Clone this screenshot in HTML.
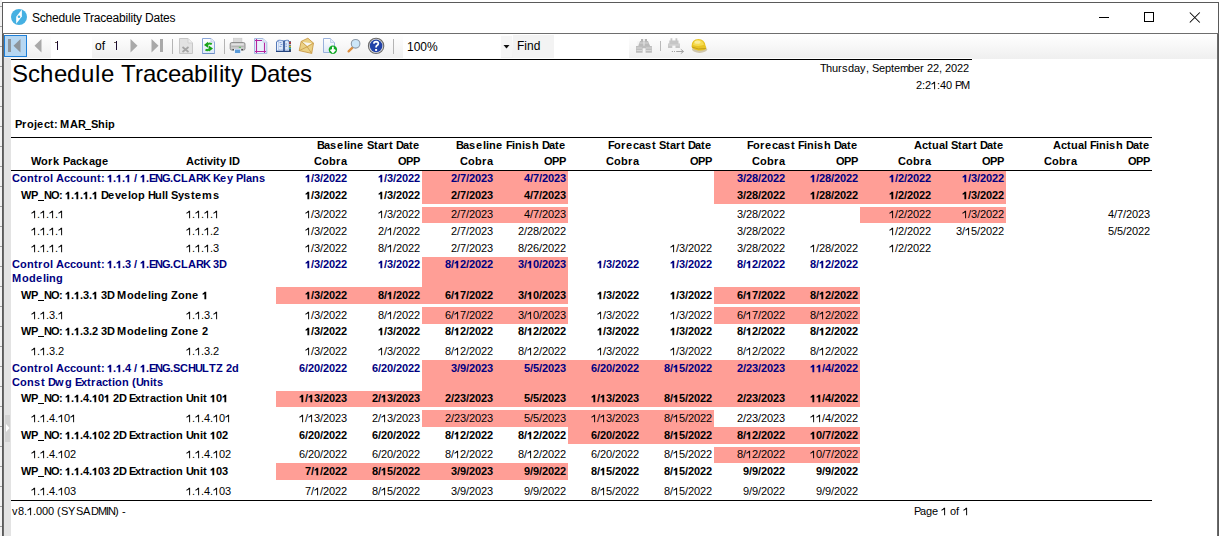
<!DOCTYPE html>
<html><head><meta charset="utf-8">
<style>
html,body{margin:0;padding:0;width:1221px;height:536px;overflow:hidden;background:#fff;}
body{position:relative;font-family:"Liberation Sans",sans-serif;}
.abs{position:absolute;}
#bgl{position:absolute;left:0;top:0;width:2px;height:536px;background:#f2f2f2;}
#win{position:absolute;left:2px;top:2px;width:1217px;height:534px;background:#fff;}
#wb-top{position:absolute;left:2px;top:2px;width:1217px;height:1px;background:#5a5a5a;}
#wb-l{position:absolute;left:2px;top:2px;width:1px;height:534px;background:#5a5a5a;}
#wb-l2{position:absolute;left:3px;top:33px;width:1px;height:503px;background:#6a6a6a;}
#wb-r{position:absolute;left:1218px;top:2px;width:1px;height:534px;background:#5a5a5a;}
#wb-r2{position:absolute;left:1217px;top:33px;width:1px;height:503px;background:#6a6a6a;}
#tb-line{position:absolute;left:2px;top:33px;width:1217px;height:1px;background:#6e6e6e;}
#title{position:absolute;left:32px;top:10px;font-size:12px;line-height:16px;letter-spacing:-0.2px;color:#000;}
#toolbar{position:absolute;left:4px;top:34px;width:1213px;height:25px;background:linear-gradient(#ffffff,#efefef);}
#gutter{position:absolute;left:4px;top:58px;width:7px;height:478px;background:#e3e3e3;}
.t{position:absolute;white-space:nowrap;font-size:11px;line-height:13px;color:#000;}
.t i{display:inline-block;font-style:normal;}
.t i.g1{position:relative;color:transparent;}
.o1{position:absolute;left:0;top:0;}
.us{position:absolute;left:0;top:11px;height:1px;}
.bd{font-weight:bold;}
.nv{color:#000080;}
.ttl{font-size:24px;line-height:28px;letter-spacing:0.1px;}
.ln{position:absolute;height:1px;background:#000;}
.pk{position:absolute;background:#FF9E96;}
</style></head><body>
<div id="bgl"></div><div class="abs" style="left:0;top:6px;width:2px;height:1px;background:#a0a0a0"></div><div class="abs" style="left:0;top:26px;width:2px;height:1px;background:#a0a0a0"></div><div class="abs" style="left:0;top:46px;width:2px;height:1px;background:#a0a0a0"></div><div class="abs" style="left:0;top:66px;width:2px;height:1px;background:#a0a0a0"></div><div class="abs" style="left:0;top:86px;width:2px;height:1px;background:#a0a0a0"></div><div class="abs" style="left:0;top:106px;width:2px;height:1px;background:#a0a0a0"></div><div class="abs" style="left:0;top:126px;width:2px;height:1px;background:#a0a0a0"></div><div class="abs" style="left:0;top:146px;width:2px;height:1px;background:#a0a0a0"></div><div class="abs" style="left:0;top:166px;width:2px;height:1px;background:#a0a0a0"></div><div class="abs" style="left:0;top:186px;width:2px;height:1px;background:#a0a0a0"></div><div class="abs" style="left:0;top:206px;width:2px;height:1px;background:#a0a0a0"></div><div class="abs" style="left:0;top:226px;width:2px;height:1px;background:#a0a0a0"></div><div class="abs" style="left:0;top:246px;width:2px;height:1px;background:#a0a0a0"></div><div class="abs" style="left:0;top:266px;width:2px;height:1px;background:#a0a0a0"></div><div class="abs" style="left:0;top:286px;width:2px;height:1px;background:#a0a0a0"></div><div class="abs" style="left:0;top:306px;width:2px;height:1px;background:#a0a0a0"></div><div class="abs" style="left:0;top:326px;width:2px;height:1px;background:#a0a0a0"></div><div class="abs" style="left:0;top:346px;width:2px;height:1px;background:#a0a0a0"></div><div class="abs" style="left:0;top:366px;width:2px;height:1px;background:#a0a0a0"></div><div class="abs" style="left:0;top:386px;width:2px;height:1px;background:#a0a0a0"></div><div class="abs" style="left:0;top:406px;width:2px;height:1px;background:#a0a0a0"></div><div class="abs" style="left:0;top:426px;width:2px;height:1px;background:#a0a0a0"></div><div class="abs" style="left:0;top:446px;width:2px;height:1px;background:#a0a0a0"></div><div class="abs" style="left:0;top:466px;width:2px;height:1px;background:#a0a0a0"></div><div class="abs" style="left:0;top:486px;width:2px;height:1px;background:#a0a0a0"></div><div class="abs" style="left:0;top:506px;width:2px;height:1px;background:#a0a0a0"></div><div class="abs" style="left:0;top:526px;width:2px;height:1px;background:#a0a0a0"></div>
<div id="win"></div>
<div id="wb-top"></div><div id="wb-l"></div><div id="wb-l2"></div><div id="wb-r"></div><div id="wb-r2"></div>
<div id="tb-line"></div>
<!-- app icon -->
<svg class="abs" style="left:11px;top:9px" width="16" height="16" viewBox="0 0 16 16">
<circle cx="8" cy="8" r="8" fill="#45b0e2"/>
<path d="M10.9 0.6 L10.9 7.6 L5.2 14.8 L5.2 7.7 Z" fill="#fff"/>
<circle cx="8" cy="7.7" r="1.3" fill="#45b0e2"/>
</svg>
<div id="title">Schedule Traceability Dates</div>
<!-- window buttons -->
<div class="abs" style="left:1099px;top:17px;width:10px;height:1px;background:#000"></div>
<div class="abs" style="left:1144px;top:12px;width:8px;height:8px;border:1px solid #000"></div>
<svg class="abs" style="left:1189px;top:12px" width="12" height="11" viewBox="0 0 12 11"><path d="M0.8 0.5 L10.8 10.5 M10.8 0.5 L0.8 10.5" stroke="#000" stroke-width="1.05"/></svg>
<div id="toolbar"></div>
<div id="gutter"></div>
<div class="abs" style="left:5px;top:415px;width:5px;height:27px;background:#d2d2d2"></div>
<svg class="abs" style="left:6px;top:424px" width="4" height="8" viewBox="0 0 4 8"><path d="M0 0 L3.5 4 L0 8 Z" fill="#fff"/></svg>
<div class="abs" style="left:11px;top:58px;width:961px;height:1px;background:#fff"></div>
<!-- toolbar items -->
<div class="abs" style="left:4px;top:35px;width:23px;height:22px;box-sizing:border-box;border:1px solid #1e7fd8;background:#b6d7f2"></div>
<div class="abs" style="left:8px;top:39px;width:3px;height:13px;background:#8d959c"></div>
<svg class="abs" style="left:13px;top:39px" width="8" height="14" viewBox="0 0 8 14"><path d="M7.5 0 L7.5 13.5 L0.5 6.75 Z" fill="#8d959c"/></svg>
<svg class="abs" style="left:34px;top:39px" width="8" height="14" viewBox="0 0 8 14"><path d="M7.5 0 L7.5 13.5 L0.5 6.75 Z" fill="#a9a9a9"/></svg>
<div class="abs" style="left:51px;top:35px;width:41px;height:23px;background:#fff"></div>
<div class="abs" style="left:57px;top:41px;width:1px;height:9px;background:#1a0a30"></div><div class="abs" style="left:55px;top:42px;width:2px;height:1px;background:#6a5a50"></div>
<div class="abs t" style="left:95px;top:38px;font-size:12px;line-height:16px;color:#000">of</div><div class="abs" style="left:116px;top:41px;width:1px;height:9px;background:#1a0a30"></div><div class="abs" style="left:114px;top:42px;width:2px;height:1px;background:#6a5a50"></div>
<svg class="abs" style="left:130px;top:39px" width="8" height="14" viewBox="0 0 8 14"><path d="M0.5 0 L0.5 13.5 L7.5 6.75 Z" fill="#a9a9a9"/></svg>
<svg class="abs" style="left:151px;top:39px" width="8" height="14" viewBox="0 0 8 14"><path d="M0.5 0 L0.5 13.5 L7.5 6.75 Z" fill="#a9a9a9"/></svg>
<div class="abs" style="left:160px;top:39px;width:3px;height:13px;background:#a9a9a9"></div>
<div class="abs" style="left:172px;top:39px;width:1px;height:15px;background:#b4b4b4"></div>
<!-- gray doc x (origin 177,36) -->
<svg class="abs" style="left:177px;top:36px" width="20" height="20" viewBox="0 0 20 20"><path d="M2.5 2.5 H11 L15.5 7 V17.5 H2.5 Z" fill="#e2e2e2" stroke="#c6c6c6"/><path d="M11 2.5 V7 H15.5" fill="#eeeeee" stroke="#d0d0d0"/><path d="M5.5 11 L11.5 16 M11.5 11 L5.5 16" stroke="#a4a4a4" stroke-width="1.7"/></svg>
<!-- refresh doc (origin 200,36) -->
<svg class="abs" style="left:200px;top:36px" width="20" height="20" viewBox="0 0 20 20"><defs><linearGradient id="dg" x1="0" y1="0" x2="0" y2="1"><stop offset="0" stop-color="#ffffff"/><stop offset="1" stop-color="#dce8f8"/></linearGradient></defs><path d="M2.5 2.5 H11 L14.5 6 V17.5 H2.5 Z" fill="url(#dg)" stroke="#8aa6d8"/><path d="M2.5 17.5 H14.5" stroke="#6f8fc8"/><path d="M11 2.5 V6 H14.5" fill="#e8eef8" stroke="#b8c8e4" stroke-width="0.8"/><path d="M4 9 L8 5.8 L8.3 12 Z" fill="#14a014"/><path d="M7 9 Q9 6.5 11.8 8.2" stroke="#22aa22" stroke-width="2" fill="none"/><path d="M13 12.5 L9 15.6 L8.7 9.6 Z" fill="#14a014"/><path d="M10 12.6 Q8 15 5.5 13.6" stroke="#22aa22" stroke-width="2" fill="none"/></svg>
<div class="abs" style="left:224px;top:39px;width:1px;height:15px;background:#b4b4b4"></div>
<!-- printer (origin 228,36) -->
<svg class="abs" style="left:228px;top:36px" width="20" height="20" viewBox="0 0 20 20"><rect x="5.3" y="2.2" width="8.6" height="5" fill="#dadada" stroke="#c8c8c8" stroke-width="0.6"/><rect x="2.2" y="6.5" width="14.8" height="7.6" rx="1.6" fill="#c9c9c9" stroke="#868686" stroke-width="0.9"/><rect x="3.5" y="7.6" width="12.2" height="1.6" fill="#e2e2e2"/><rect x="3.5" y="10" width="12.2" height="1" fill="#b4b4b4"/><rect x="4.5" y="13" width="10.5" height="1.3" fill="#4a4a4a"/><rect x="10.8" y="10.8" width="2.2" height="1.1" fill="#5cc05c"/><rect x="6" y="12.8" width="7.2" height="4.8" fill="#e8f0fa"/><rect x="7" y="13.6" width="5.2" height="3.4" fill="#5a9ad8"/></svg>
<!-- page setup (origin 252,36) -->
<svg class="abs" style="left:252px;top:36px" width="20" height="20" viewBox="0 0 20 20"><path d="M2.5 2.5 H11 L14.8 6.3 V17.5 H2.5 Z" fill="#eaf1fb" stroke="#a4badf"/><path d="M11 2.5 V6.3 H14.8" fill="#e0e8f4" stroke="#c0cee6" stroke-width="0.8"/><path d="M4.5 3 V17 M12.5 6.7 V17 M3 4.5 H10 M3 15.5 H14" stroke="#b4259e" stroke-width="1.1"/></svg>
<!-- book (origin 274,36) -->
<svg class="abs" style="left:274px;top:36px" width="20" height="20" viewBox="0 0 20 20"><path d="M2 5.5 H3.5 V4 Q6.5 3.3 9.5 4.5 Q12.5 3.3 15 4 V5.5 H16.8 V16 H2 Z" fill="#5478b8"/><path d="M3 6 H9.3 V14.6 H3 Z M10.7 6 H15.2 V14.6 H10.7 Z" fill="#f4f8fe"/><path d="M4.3 4.8 Q6.8 4.2 9.2 5.2 V13.8 Q6.8 13 4.3 13.6 Z M10.8 5.2 Q12.8 4.2 14.4 4.8 V13.6 Q12.6 13 10.8 13.8 Z" fill="#e2ecfa" stroke="#8aa8dc" stroke-width="0.5"/><path d="M5.5 6.6 H7.5 M6.5 8.5 H8.3 M5.5 10.4 H7.5 M11.5 8 H13 M11.5 10.3 H13" stroke="#6f92d6" stroke-width="0.9"/><rect x="9.3" y="5" width="1.4" height="11" fill="#2c4c8c"/><path d="M2 15.5 H16.8" stroke="#24447e" stroke-width="1"/><rect x="15.2" y="5.3" width="1.6" height="10" fill="#303848"/><rect x="15.3" y="6.1" width="1.5" height="1.5" fill="#e83232"/><rect x="15.3" y="8" width="1.5" height="1.3" fill="#e0e0e0"/><rect x="15.3" y="9.9" width="1.5" height="1.5" fill="#ece424"/><rect x="15.3" y="11.8" width="1.5" height="1.4" fill="#24cce0"/></svg>
<!-- envelope (origin 296,36) -->
<svg class="abs" style="left:296px;top:36px" width="20" height="20" viewBox="0 0 20 20"><path d="M5.2 5.4 L11.9 2.2 L17.5 7.1 L15.7 17.4 L3.2 14.6 Z" fill="#ebd184" stroke="#c89a48" stroke-width="0.9"/><path d="M6.5 6 L15.7 7.3 L11.2 9.9 Z" fill="#f6f6f6"/><path d="M5.2 5.4 L11.2 10.8 L17.5 7.1 M3.2 14.6 L11.2 10.8 L15.7 17.4" stroke="#c89a48" stroke-width="0.8" fill="none"/></svg>
<!-- export doc (origin 320,36) -->
<svg class="abs" style="left:320px;top:36px" width="20" height="20" viewBox="0 0 20 20"><path d="M3.5 2.5 H10.5 L14.5 6.5 V16.5 H3.5 Z" fill="url(#dg)" stroke="#9ab2dc"/><path d="M10.5 2.5 V6.5 H14.5" fill="#e4ecf8" stroke="#b8c8e4" stroke-width="0.8"/><circle cx="12.9" cy="13.8" r="4.2" fill="#12a826"/><path d="M12.9 10.8 V16.2 M10.6 13.6 L12.9 16.2 L15.2 13.6" stroke="#fff" stroke-width="1.8" fill="none"/></svg>
<!-- magnifier (origin 345,36) -->
<svg class="abs" style="left:345px;top:36px" width="20" height="20" viewBox="0 0 20 20"><path d="M3.6 15.4 L7.5 11.6" stroke="#dc8e3e" stroke-width="2.3" stroke-linecap="round"/><circle cx="10.6" cy="7.8" r="4.3" fill="#cce6f8" stroke="#8d9aa8" stroke-width="1.1"/></svg>
<!-- help (origin 366,36) -->
<svg class="abs" style="left:366px;top:36px" width="20" height="20" viewBox="0 0 20 20"><circle cx="10.1" cy="9.9" r="8.2" fill="#6a6a6a"/><circle cx="10.1" cy="9.9" r="7.1" fill="#e0e0e0"/><circle cx="10.1" cy="9.9" r="6.3" fill="#2142a8"/><path d="M7.8 7.7 Q8 5.6 10.1 5.6 Q12.4 5.7 12.3 7.6 Q12.2 8.8 10.9 9.5 Q10.1 10 10.1 11.5" stroke="#fff" stroke-width="1.8" fill="none"/><rect x="9.1" y="13" width="2" height="1.9" fill="#fff"/></svg>
<div class="abs" style="left:393px;top:39px;width:1px;height:15px;background:#b4b4b4"></div>
<!-- zoom combo -->
<div class="abs" style="left:403px;top:35px;width:98px;height:23px;background:#fff"></div>
<div class="abs t" style="left:407px;top:39px;font-size:12px;line-height:16px;color:#000">100%</div>
<div class="abs" style="left:501px;top:36px;width:11px;height:21px;background:#f6f6f6"></div><svg class="abs" style="left:503px;top:45px" width="7" height="4" viewBox="0 0 7 4"><path d="M0.5 0 H6.5 L3.5 3.5 Z" fill="#111"/></svg>
<div class="abs" style="left:513px;top:35px;width:41px;height:23px;background:#f3f3f3"></div>
<div class="abs t" style="left:517px;top:38px;font-size:12px;line-height:16px;color:#000">Find</div>
<div class="abs" style="left:554px;top:34px;width:75px;height:24px;background:#fff"></div>
<!-- binoculars (origin 634,36) -->
<svg class="abs" style="left:634px;top:36px" width="20" height="20" viewBox="0 0 20 20"><path d="M7 3 H9.2 V5.2 H7 Z M10.8 3 H13 V5.2 H10.8 Z" fill="#b4b4b4"/><path d="M6 5 H9.6 V10.2 H4 Z M10.4 5 H14 L16.2 10.2 H10.4 Z" fill="#bababa"/><path d="M2 10 H8.6 V16.8 H2 Z M11.6 10 H17.9 V16.8 H11.6 Z M8.4 9.8 H11.8 V12.3 H8.4 Z" fill="#bdbdbd"/><path d="M5.5 7 H14.5 M2.5 12 H8 M12 12 H17.5 M2.5 14.5 H8 M12 14.5 H17.5" stroke="#dedede" stroke-width="0.8"/><path d="M4 5.2 V10" stroke="#e8e8e8" stroke-width="0.6"/></svg>
<div class="abs" style="left:660px;top:41px;width:1px;height:10px;background:#b9b9b9"></div>
<svg class="abs" style="left:665px;top:36px" width="22" height="20" viewBox="0 0 22 20"><path d="M5.5 2.2 H7.3 V4.5 H10.5 V2.2 H12.3 V4.5 H13.5 V7.5 H14.9 V12 H10.5 V9.5 H7.3 V12 H3 V7.5 H4.3 V4.5 H5.5 Z" fill="#c6c6c6"/><path d="M3.5 9 H14.5" stroke="#dddddd" stroke-width="0.8"/><path d="M6.8 15.5 H8 M9 15.5 H10 M11.2 15.5 H18.3 M15.8 13.3 L18.6 15.5 L15.8 17.6" stroke="#a4a4a4" stroke-width="1" fill="none"/></svg>
<!-- helmet (origin 691,36) -->
<svg class="abs" style="left:689px;top:36px" width="20" height="20" viewBox="0 0 20 20"><ellipse cx="10.6" cy="13.3" rx="7.5" ry="3.6" fill="#b0a070" opacity="0.55"/><path d="M2.5 10.5 Q2.5 3 9.5 3 Q15.5 3.2 16.5 9.5 Q17.8 11 16.8 13.3 Q13 15.5 7 14 Q3 12.8 2.5 10.5 Z" fill="#e8c424"/><path d="M4 9 Q4.5 4 9.5 4 Q14 4.2 15 8.8 Q10 11 4 9 Z" fill="#f6dc50"/><ellipse cx="8.5" cy="6.2" rx="3" ry="1.6" fill="#faec98"/><path d="M3 11 Q9 14.2 16.8 12.5" stroke="#c09a18" stroke-width="0.9" fill="none"/></svg>

<div class="pk" style="left:422px;top:171px;width:146px;height:33px"></div>
<div class="pk" style="left:714px;top:171px;width:146px;height:33px"></div>
<div class="pk" style="left:860px;top:171px;width:146px;height:33px"></div>
<div class="pk" style="left:422px;top:207px;width:146px;height:16px"></div>
<div class="pk" style="left:860px;top:207px;width:146px;height:16px"></div>
<div class="pk" style="left:422px;top:257px;width:146px;height:30px"></div>
<div class="pk" style="left:276px;top:287px;width:146px;height:17px"></div>
<div class="pk" style="left:422px;top:287px;width:146px;height:17px"></div>
<div class="pk" style="left:714px;top:287px;width:146px;height:17px"></div>
<div class="pk" style="left:422px;top:307px;width:146px;height:17px"></div>
<div class="pk" style="left:714px;top:307px;width:146px;height:17px"></div>
<div class="pk" style="left:422px;top:360px;width:146px;height:31px"></div>
<div class="pk" style="left:568px;top:360px;width:146px;height:31px"></div>
<div class="pk" style="left:714px;top:360px;width:146px;height:31px"></div>
<div class="pk" style="left:276px;top:391px;width:146px;height:16px"></div>
<div class="pk" style="left:422px;top:391px;width:146px;height:16px"></div>
<div class="pk" style="left:568px;top:391px;width:146px;height:16px"></div>
<div class="pk" style="left:714px;top:391px;width:146px;height:16px"></div>
<div class="pk" style="left:422px;top:410px;width:146px;height:17px"></div>
<div class="pk" style="left:568px;top:410px;width:146px;height:17px"></div>
<div class="pk" style="left:568px;top:427px;width:146px;height:17px"></div>
<div class="pk" style="left:714px;top:427px;width:146px;height:17px"></div>
<div class="pk" style="left:714px;top:447px;width:146px;height:16px"></div>
<div class="pk" style="left:276px;top:463px;width:146px;height:17px"></div>
<div class="pk" style="left:422px;top:463px;width:146px;height:17px"></div>
<div class="t ttl" style="left:12px;top:60px"><i style="width:16px">S</i><i style="width:12px">c</i><i style="width:14px">h</i><i style="width:13px">e</i><i style="width:14px">d</i><i style="width:14px">u</i><i style="width:6px">l</i><i style="width:13px">e</i><i style="width:7px">&nbsp;</i><i style="width:14px">T</i><i style="width:8px">r</i><i style="width:13px">a</i><i style="width:12px">c</i><i style="width:13px">e</i><i style="width:13px">a</i><i style="width:14px">b</i><i style="width:5px">i</i><i style="width:6px">l</i><i style="width:5px">i</i><i style="width:7px">t</i><i style="width:12px">y</i><i style="width:7px">&nbsp;</i><i style="width:17px">D</i><i style="width:13px">a</i><i style="width:7px">t</i><i style="width:13px">e</i><i style="width:12px">s</i></div>
<div class="ln" style="left:11px;top:59px;width:961px"></div>
<div class="t rg" style="left:820px;top:62px"><i style="width:6px">T</i><i style="width:6px">h</i><i style="width:6px">u</i><i style="width:4px">r</i><i style="width:6px">s</i><i style="width:6px">d</i><i style="width:6px">a</i><i style="width:6px">y</i><i style="width:3px">,</i><i style="width:3px">&nbsp;</i><i style="width:7px">S</i><i style="width:6px">e</i><i style="width:6px">p</i><i style="width:3px">t</i><i style="width:6px">e</i><i style="width:8px">m</i><i style="width:6px">b</i><i style="width:6px">e</i><i style="width:4px">r</i><i style="width:3px">&nbsp;</i><i style="width:6px">2</i><i style="width:6px">2</i><i style="width:3px">,</i><i style="width:3px">&nbsp;</i><i style="width:6px">2</i><i style="width:6px">0</i><i style="width:6px">2</i><i style="width:6px">2</i></div>
<div class="t rg" style="left:916px;top:79px"><i style="width:6px">2</i><i style="width:3px">:</i><i style="width:6px">2</i><i class="g1" style="width:6px">1<svg class="o1" width="6" height="13" viewBox="0 -1919.5 1117.1 2420.4"><path transform="scale(1,-1)" fill="#000" d="M763 0 L583 0 L583 1147 C500 1070 330 960 76 838 L76 1012 C250 1090 440 1230 548 1409 L763 1409 Z"/></svg></i><i style="width:3px">:</i><i style="width:6px">4</i><i style="width:6px">0</i><i style="width:3px">&nbsp;</i><i style="width:6px">P</i><i style="width:8px">M</i></div>
<div class="t bd" style="left:15px;top:118px"><i style="width:7px">P</i><i style="width:5px">r</i><i style="width:7px">o</i><i style="width:3px">j</i><i style="width:7px">e</i><i style="width:6px">c</i><i style="width:4px">t</i><i style="width:3px">:</i><i style="width:3px">&nbsp;</i><i style="width:10px">M</i><i style="width:8px">A</i><i style="width:7px">R</i><i class="g1" style="width:6px">_<b class="us" style="width:6px;background:#000"></b></i><i style="width:7px">S</i><i style="width:7px">h</i><i style="width:3px">i</i><i style="width:7px">p</i></div>
<div class="ln" style="left:11px;top:137px;width:1141px"></div>
<div class="ln" style="left:11px;top:170px;width:1141px"></div>
<div class="t bd" style="left:317px;top:139px"><i style="width:7px">B</i><i style="width:6px">a</i><i style="width:7px">s</i><i style="width:7px">e</i><i style="width:3px">l</i><i style="width:3px">i</i><i style="width:7px">n</i><i style="width:7px">e</i><i style="width:3px">&nbsp;</i><i style="width:7px">S</i><i style="width:4px">t</i><i style="width:6px">a</i><i style="width:5px">r</i><i style="width:4px">t</i><i style="width:3px">&nbsp;</i><i style="width:7px">D</i><i style="width:6px">a</i><i style="width:4px">t</i><i style="width:7px">e</i></div>
<div class="t bd" style="left:314px;top:155px"><i style="width:8px">C</i><i style="width:7px">o</i><i style="width:7px">b</i><i style="width:5px">r</i><i style="width:6px">a</i></div>
<div class="t bd" style="left:398px;top:155px"><i style="width:8px">O</i><i style="width:7px">P</i><i style="width:7px">P</i></div>
<div class="t bd" style="left:456px;top:139px"><i style="width:7px">B</i><i style="width:6px">a</i><i style="width:7px">s</i><i style="width:7px">e</i><i style="width:3px">l</i><i style="width:3px">i</i><i style="width:7px">n</i><i style="width:7px">e</i><i style="width:3px">&nbsp;</i><i style="width:6px">F</i><i style="width:3px">i</i><i style="width:7px">n</i><i style="width:3px">i</i><i style="width:7px">s</i><i style="width:7px">h</i><i style="width:3px">&nbsp;</i><i style="width:7px">D</i><i style="width:6px">a</i><i style="width:4px">t</i><i style="width:7px">e</i></div>
<div class="t bd" style="left:460px;top:155px"><i style="width:8px">C</i><i style="width:7px">o</i><i style="width:7px">b</i><i style="width:5px">r</i><i style="width:6px">a</i></div>
<div class="t bd" style="left:544px;top:155px"><i style="width:8px">O</i><i style="width:7px">P</i><i style="width:7px">P</i></div>
<div class="t bd" style="left:608px;top:139px"><i style="width:6px">F</i><i style="width:7px">o</i><i style="width:5px">r</i><i style="width:7px">e</i><i style="width:6px">c</i><i style="width:6px">a</i><i style="width:7px">s</i><i style="width:4px">t</i><i style="width:3px">&nbsp;</i><i style="width:7px">S</i><i style="width:4px">t</i><i style="width:6px">a</i><i style="width:5px">r</i><i style="width:4px">t</i><i style="width:3px">&nbsp;</i><i style="width:7px">D</i><i style="width:6px">a</i><i style="width:4px">t</i><i style="width:7px">e</i></div>
<div class="t bd" style="left:606px;top:155px"><i style="width:8px">C</i><i style="width:7px">o</i><i style="width:7px">b</i><i style="width:5px">r</i><i style="width:6px">a</i></div>
<div class="t bd" style="left:690px;top:155px"><i style="width:8px">O</i><i style="width:7px">P</i><i style="width:7px">P</i></div>
<div class="t bd" style="left:747px;top:139px"><i style="width:6px">F</i><i style="width:7px">o</i><i style="width:5px">r</i><i style="width:7px">e</i><i style="width:6px">c</i><i style="width:6px">a</i><i style="width:7px">s</i><i style="width:4px">t</i><i style="width:3px">&nbsp;</i><i style="width:6px">F</i><i style="width:3px">i</i><i style="width:7px">n</i><i style="width:3px">i</i><i style="width:7px">s</i><i style="width:7px">h</i><i style="width:3px">&nbsp;</i><i style="width:7px">D</i><i style="width:6px">a</i><i style="width:4px">t</i><i style="width:7px">e</i></div>
<div class="t bd" style="left:752px;top:155px"><i style="width:8px">C</i><i style="width:7px">o</i><i style="width:7px">b</i><i style="width:5px">r</i><i style="width:6px">a</i></div>
<div class="t bd" style="left:836px;top:155px"><i style="width:8px">O</i><i style="width:7px">P</i><i style="width:7px">P</i></div>
<div class="t bd" style="left:914px;top:139px"><i style="width:8px">A</i><i style="width:6px">c</i><i style="width:4px">t</i><i style="width:7px">u</i><i style="width:6px">a</i><i style="width:3px">l</i><i style="width:3px">&nbsp;</i><i style="width:7px">S</i><i style="width:4px">t</i><i style="width:6px">a</i><i style="width:5px">r</i><i style="width:4px">t</i><i style="width:3px">&nbsp;</i><i style="width:7px">D</i><i style="width:6px">a</i><i style="width:4px">t</i><i style="width:7px">e</i></div>
<div class="t bd" style="left:898px;top:155px"><i style="width:8px">C</i><i style="width:7px">o</i><i style="width:7px">b</i><i style="width:5px">r</i><i style="width:6px">a</i></div>
<div class="t bd" style="left:982px;top:155px"><i style="width:8px">O</i><i style="width:7px">P</i><i style="width:7px">P</i></div>
<div class="t bd" style="left:1053px;top:139px"><i style="width:8px">A</i><i style="width:6px">c</i><i style="width:4px">t</i><i style="width:7px">u</i><i style="width:6px">a</i><i style="width:3px">l</i><i style="width:3px">&nbsp;</i><i style="width:6px">F</i><i style="width:3px">i</i><i style="width:7px">n</i><i style="width:3px">i</i><i style="width:7px">s</i><i style="width:7px">h</i><i style="width:3px">&nbsp;</i><i style="width:7px">D</i><i style="width:6px">a</i><i style="width:4px">t</i><i style="width:7px">e</i></div>
<div class="t bd" style="left:1044px;top:155px"><i style="width:8px">C</i><i style="width:7px">o</i><i style="width:7px">b</i><i style="width:5px">r</i><i style="width:6px">a</i></div>
<div class="t bd" style="left:1128px;top:155px"><i style="width:8px">O</i><i style="width:7px">P</i><i style="width:7px">P</i></div>
<div class="t bd" style="left:31px;top:155px"><i style="width:10px">W</i><i style="width:7px">o</i><i style="width:5px">r</i><i style="width:7px">k</i><i style="width:3px">&nbsp;</i><i style="width:7px">P</i><i style="width:6px">a</i><i style="width:6px">c</i><i style="width:7px">k</i><i style="width:6px">a</i><i style="width:7px">g</i><i style="width:7px">e</i></div>
<div class="t bd" style="left:186px;top:155px"><i style="width:8px">A</i><i style="width:6px">c</i><i style="width:4px">t</i><i style="width:3px">i</i><i style="width:6px">v</i><i style="width:3px">i</i><i style="width:4px">t</i><i style="width:6px">y</i><i style="width:3px">&nbsp;</i><i style="width:3px">I</i><i style="width:7px">D</i></div>
<div class="t bd nv" style="left:12px;top:172px"><i style="width:8px">C</i><i style="width:7px">o</i><i style="width:7px">n</i><i style="width:4px">t</i><i style="width:5px">r</i><i style="width:7px">o</i><i style="width:3px">l</i><i style="width:3px">&nbsp;</i><i style="width:8px">A</i><i style="width:6px">c</i><i style="width:6px">c</i><i style="width:7px">o</i><i style="width:7px">u</i><i style="width:7px">n</i><i style="width:4px">t</i><i style="width:3px">:</i><i style="width:3px">&nbsp;</i><i class="g1" style="width:6px">1<svg class="o1" width="6" height="13" viewBox="0 -1919.5 1117.1 2420.4"><path transform="scale(1,-1)" fill="#000080" d="M790 0 L450 0 L450 1000 C370 940 240 900 110 870 L110 1090 C290 1150 410 1260 480 1409 L790 1409 Z"/></svg></i><i style="width:3px">.</i><i class="g1" style="width:6px">1<svg class="o1" width="6" height="13" viewBox="0 -1919.5 1117.1 2420.4"><path transform="scale(1,-1)" fill="#000080" d="M790 0 L450 0 L450 1000 C370 940 240 900 110 870 L110 1090 C290 1150 410 1260 480 1409 L790 1409 Z"/></svg></i><i style="width:3px">.</i><i class="g1" style="width:6px">1<svg class="o1" width="6" height="13" viewBox="0 -1919.5 1117.1 2420.4"><path transform="scale(1,-1)" fill="#000080" d="M790 0 L450 0 L450 1000 C370 940 240 900 110 870 L110 1090 C290 1150 410 1260 480 1409 L790 1409 Z"/></svg></i><i style="width:3px">&nbsp;</i><i style="width:3px">/</i><i style="width:3px">&nbsp;</i><i class="g1" style="width:6px">1<svg class="o1" width="6" height="13" viewBox="0 -1919.5 1117.1 2420.4"><path transform="scale(1,-1)" fill="#000080" d="M790 0 L450 0 L450 1000 C370 940 240 900 110 870 L110 1090 C290 1150 410 1260 480 1409 L790 1409 Z"/></svg></i><i style="width:3px">.</i><i style="width:6px">E</i><i style="width:7px">N</i><i style="width:8px">G</i><i style="width:3px">.</i><i style="width:8px">C</i><i style="width:7px">L</i><i style="width:8px">A</i><i style="width:7px">R</i><i style="width:7px">K</i><i style="width:3px">&nbsp;</i><i style="width:7px">K</i><i style="width:7px">e</i><i style="width:6px">y</i><i style="width:3px">&nbsp;</i><i style="width:7px">P</i><i style="width:3px">l</i><i style="width:6px">a</i><i style="width:7px">n</i><i style="width:7px">s</i></div>
<div class="t bd nv" style="left:305px;top:172px"><i class="g1" style="width:6px">1<svg class="o1" width="6" height="13" viewBox="0 -1919.5 1117.1 2420.4"><path transform="scale(1,-1)" fill="#000080" d="M790 0 L450 0 L450 1000 C370 940 240 900 110 870 L110 1090 C290 1150 410 1260 480 1409 L790 1409 Z"/></svg></i><i style="width:3px">/</i><i style="width:6px">3</i><i style="width:3px">/</i><i style="width:6px">2</i><i style="width:6px">0</i><i style="width:6px">2</i><i style="width:6px">2</i></div>
<div class="t bd nv" style="left:378px;top:172px"><i class="g1" style="width:6px">1<svg class="o1" width="6" height="13" viewBox="0 -1919.5 1117.1 2420.4"><path transform="scale(1,-1)" fill="#000080" d="M790 0 L450 0 L450 1000 C370 940 240 900 110 870 L110 1090 C290 1150 410 1260 480 1409 L790 1409 Z"/></svg></i><i style="width:3px">/</i><i style="width:6px">3</i><i style="width:3px">/</i><i style="width:6px">2</i><i style="width:6px">0</i><i style="width:6px">2</i><i style="width:6px">2</i></div>
<div class="t bd nv" style="left:451px;top:172px"><i style="width:6px">2</i><i style="width:3px">/</i><i style="width:6px">7</i><i style="width:3px">/</i><i style="width:6px">2</i><i style="width:6px">0</i><i style="width:6px">2</i><i style="width:6px">3</i></div>
<div class="t bd nv" style="left:524px;top:172px"><i style="width:6px">4</i><i style="width:3px">/</i><i style="width:6px">7</i><i style="width:3px">/</i><i style="width:6px">2</i><i style="width:6px">0</i><i style="width:6px">2</i><i style="width:6px">3</i></div>
<div class="t bd nv" style="left:737px;top:172px"><i style="width:6px">3</i><i style="width:3px">/</i><i style="width:6px">2</i><i style="width:6px">8</i><i style="width:3px">/</i><i style="width:6px">2</i><i style="width:6px">0</i><i style="width:6px">2</i><i style="width:6px">2</i></div>
<div class="t bd nv" style="left:810px;top:172px"><i class="g1" style="width:6px">1<svg class="o1" width="6" height="13" viewBox="0 -1919.5 1117.1 2420.4"><path transform="scale(1,-1)" fill="#000080" d="M790 0 L450 0 L450 1000 C370 940 240 900 110 870 L110 1090 C290 1150 410 1260 480 1409 L790 1409 Z"/></svg></i><i style="width:3px">/</i><i style="width:6px">2</i><i style="width:6px">8</i><i style="width:3px">/</i><i style="width:6px">2</i><i style="width:6px">0</i><i style="width:6px">2</i><i style="width:6px">2</i></div>
<div class="t bd nv" style="left:889px;top:172px"><i class="g1" style="width:6px">1<svg class="o1" width="6" height="13" viewBox="0 -1919.5 1117.1 2420.4"><path transform="scale(1,-1)" fill="#000080" d="M790 0 L450 0 L450 1000 C370 940 240 900 110 870 L110 1090 C290 1150 410 1260 480 1409 L790 1409 Z"/></svg></i><i style="width:3px">/</i><i style="width:6px">2</i><i style="width:3px">/</i><i style="width:6px">2</i><i style="width:6px">0</i><i style="width:6px">2</i><i style="width:6px">2</i></div>
<div class="t bd nv" style="left:962px;top:172px"><i class="g1" style="width:6px">1<svg class="o1" width="6" height="13" viewBox="0 -1919.5 1117.1 2420.4"><path transform="scale(1,-1)" fill="#000080" d="M790 0 L450 0 L450 1000 C370 940 240 900 110 870 L110 1090 C290 1150 410 1260 480 1409 L790 1409 Z"/></svg></i><i style="width:3px">/</i><i style="width:6px">3</i><i style="width:3px">/</i><i style="width:6px">2</i><i style="width:6px">0</i><i style="width:6px">2</i><i style="width:6px">2</i></div>
<div class="t bd" style="left:21px;top:189px"><i style="width:10px">W</i><i style="width:7px">P</i><i class="g1" style="width:6px">_<b class="us" style="width:6px;background:#000"></b></i><i style="width:7px">N</i><i style="width:8px">O</i><i style="width:3px">:</i><i style="width:3px">&nbsp;</i><i class="g1" style="width:6px">1<svg class="o1" width="6" height="13" viewBox="0 -1919.5 1117.1 2420.4"><path transform="scale(1,-1)" fill="#000" d="M790 0 L450 0 L450 1000 C370 940 240 900 110 870 L110 1090 C290 1150 410 1260 480 1409 L790 1409 Z"/></svg></i><i style="width:3px">.</i><i class="g1" style="width:6px">1<svg class="o1" width="6" height="13" viewBox="0 -1919.5 1117.1 2420.4"><path transform="scale(1,-1)" fill="#000" d="M790 0 L450 0 L450 1000 C370 940 240 900 110 870 L110 1090 C290 1150 410 1260 480 1409 L790 1409 Z"/></svg></i><i style="width:3px">.</i><i class="g1" style="width:6px">1<svg class="o1" width="6" height="13" viewBox="0 -1919.5 1117.1 2420.4"><path transform="scale(1,-1)" fill="#000" d="M790 0 L450 0 L450 1000 C370 940 240 900 110 870 L110 1090 C290 1150 410 1260 480 1409 L790 1409 Z"/></svg></i><i style="width:3px">.</i><i class="g1" style="width:6px">1<svg class="o1" width="6" height="13" viewBox="0 -1919.5 1117.1 2420.4"><path transform="scale(1,-1)" fill="#000" d="M790 0 L450 0 L450 1000 C370 940 240 900 110 870 L110 1090 C290 1150 410 1260 480 1409 L790 1409 Z"/></svg></i><i style="width:3px">&nbsp;</i><i style="width:7px">D</i><i style="width:7px">e</i><i style="width:6px">v</i><i style="width:7px">e</i><i style="width:3px">l</i><i style="width:7px">o</i><i style="width:7px">p</i><i style="width:3px">&nbsp;</i><i style="width:7px">H</i><i style="width:7px">u</i><i style="width:3px">l</i><i style="width:3px">l</i><i style="width:3px">&nbsp;</i><i style="width:7px">S</i><i style="width:6px">y</i><i style="width:7px">s</i><i style="width:4px">t</i><i style="width:7px">e</i><i style="width:11px">m</i><i style="width:7px">s</i></div>
<div class="t bd" style="left:305px;top:189px"><i class="g1" style="width:6px">1<svg class="o1" width="6" height="13" viewBox="0 -1919.5 1117.1 2420.4"><path transform="scale(1,-1)" fill="#000" d="M790 0 L450 0 L450 1000 C370 940 240 900 110 870 L110 1090 C290 1150 410 1260 480 1409 L790 1409 Z"/></svg></i><i style="width:3px">/</i><i style="width:6px">3</i><i style="width:3px">/</i><i style="width:6px">2</i><i style="width:6px">0</i><i style="width:6px">2</i><i style="width:6px">2</i></div>
<div class="t bd" style="left:378px;top:189px"><i class="g1" style="width:6px">1<svg class="o1" width="6" height="13" viewBox="0 -1919.5 1117.1 2420.4"><path transform="scale(1,-1)" fill="#000" d="M790 0 L450 0 L450 1000 C370 940 240 900 110 870 L110 1090 C290 1150 410 1260 480 1409 L790 1409 Z"/></svg></i><i style="width:3px">/</i><i style="width:6px">3</i><i style="width:3px">/</i><i style="width:6px">2</i><i style="width:6px">0</i><i style="width:6px">2</i><i style="width:6px">2</i></div>
<div class="t bd" style="left:451px;top:189px"><i style="width:6px">2</i><i style="width:3px">/</i><i style="width:6px">7</i><i style="width:3px">/</i><i style="width:6px">2</i><i style="width:6px">0</i><i style="width:6px">2</i><i style="width:6px">3</i></div>
<div class="t bd" style="left:524px;top:189px"><i style="width:6px">4</i><i style="width:3px">/</i><i style="width:6px">7</i><i style="width:3px">/</i><i style="width:6px">2</i><i style="width:6px">0</i><i style="width:6px">2</i><i style="width:6px">3</i></div>
<div class="t bd" style="left:737px;top:189px"><i style="width:6px">3</i><i style="width:3px">/</i><i style="width:6px">2</i><i style="width:6px">8</i><i style="width:3px">/</i><i style="width:6px">2</i><i style="width:6px">0</i><i style="width:6px">2</i><i style="width:6px">2</i></div>
<div class="t bd" style="left:810px;top:189px"><i class="g1" style="width:6px">1<svg class="o1" width="6" height="13" viewBox="0 -1919.5 1117.1 2420.4"><path transform="scale(1,-1)" fill="#000" d="M790 0 L450 0 L450 1000 C370 940 240 900 110 870 L110 1090 C290 1150 410 1260 480 1409 L790 1409 Z"/></svg></i><i style="width:3px">/</i><i style="width:6px">2</i><i style="width:6px">8</i><i style="width:3px">/</i><i style="width:6px">2</i><i style="width:6px">0</i><i style="width:6px">2</i><i style="width:6px">2</i></div>
<div class="t bd" style="left:889px;top:189px"><i class="g1" style="width:6px">1<svg class="o1" width="6" height="13" viewBox="0 -1919.5 1117.1 2420.4"><path transform="scale(1,-1)" fill="#000" d="M790 0 L450 0 L450 1000 C370 940 240 900 110 870 L110 1090 C290 1150 410 1260 480 1409 L790 1409 Z"/></svg></i><i style="width:3px">/</i><i style="width:6px">2</i><i style="width:3px">/</i><i style="width:6px">2</i><i style="width:6px">0</i><i style="width:6px">2</i><i style="width:6px">2</i></div>
<div class="t bd" style="left:962px;top:189px"><i class="g1" style="width:6px">1<svg class="o1" width="6" height="13" viewBox="0 -1919.5 1117.1 2420.4"><path transform="scale(1,-1)" fill="#000" d="M790 0 L450 0 L450 1000 C370 940 240 900 110 870 L110 1090 C290 1150 410 1260 480 1409 L790 1409 Z"/></svg></i><i style="width:3px">/</i><i style="width:6px">3</i><i style="width:3px">/</i><i style="width:6px">2</i><i style="width:6px">0</i><i style="width:6px">2</i><i style="width:6px">2</i></div>
<div class="t rg" style="left:31px;top:208px"><i class="g1" style="width:6px">1<svg class="o1" width="6" height="13" viewBox="0 -1919.5 1117.1 2420.4"><path transform="scale(1,-1)" fill="#000" d="M763 0 L583 0 L583 1147 C500 1070 330 960 76 838 L76 1012 C250 1090 440 1230 548 1409 L763 1409 Z"/></svg></i><i style="width:3px">.</i><i class="g1" style="width:6px">1<svg class="o1" width="6" height="13" viewBox="0 -1919.5 1117.1 2420.4"><path transform="scale(1,-1)" fill="#000" d="M763 0 L583 0 L583 1147 C500 1070 330 960 76 838 L76 1012 C250 1090 440 1230 548 1409 L763 1409 Z"/></svg></i><i style="width:3px">.</i><i class="g1" style="width:6px">1<svg class="o1" width="6" height="13" viewBox="0 -1919.5 1117.1 2420.4"><path transform="scale(1,-1)" fill="#000" d="M763 0 L583 0 L583 1147 C500 1070 330 960 76 838 L76 1012 C250 1090 440 1230 548 1409 L763 1409 Z"/></svg></i><i style="width:3px">.</i><i class="g1" style="width:6px">1<svg class="o1" width="6" height="13" viewBox="0 -1919.5 1117.1 2420.4"><path transform="scale(1,-1)" fill="#000" d="M763 0 L583 0 L583 1147 C500 1070 330 960 76 838 L76 1012 C250 1090 440 1230 548 1409 L763 1409 Z"/></svg></i></div>
<div class="t rg" style="left:186px;top:208px"><i class="g1" style="width:6px">1<svg class="o1" width="6" height="13" viewBox="0 -1919.5 1117.1 2420.4"><path transform="scale(1,-1)" fill="#000" d="M763 0 L583 0 L583 1147 C500 1070 330 960 76 838 L76 1012 C250 1090 440 1230 548 1409 L763 1409 Z"/></svg></i><i style="width:3px">.</i><i class="g1" style="width:6px">1<svg class="o1" width="6" height="13" viewBox="0 -1919.5 1117.1 2420.4"><path transform="scale(1,-1)" fill="#000" d="M763 0 L583 0 L583 1147 C500 1070 330 960 76 838 L76 1012 C250 1090 440 1230 548 1409 L763 1409 Z"/></svg></i><i style="width:3px">.</i><i class="g1" style="width:6px">1<svg class="o1" width="6" height="13" viewBox="0 -1919.5 1117.1 2420.4"><path transform="scale(1,-1)" fill="#000" d="M763 0 L583 0 L583 1147 C500 1070 330 960 76 838 L76 1012 C250 1090 440 1230 548 1409 L763 1409 Z"/></svg></i><i style="width:3px">.</i><i class="g1" style="width:6px">1<svg class="o1" width="6" height="13" viewBox="0 -1919.5 1117.1 2420.4"><path transform="scale(1,-1)" fill="#000" d="M763 0 L583 0 L583 1147 C500 1070 330 960 76 838 L76 1012 C250 1090 440 1230 548 1409 L763 1409 Z"/></svg></i></div>
<div class="t rg" style="left:305px;top:208px"><i class="g1" style="width:6px">1<svg class="o1" width="6" height="13" viewBox="0 -1919.5 1117.1 2420.4"><path transform="scale(1,-1)" fill="#000" d="M763 0 L583 0 L583 1147 C500 1070 330 960 76 838 L76 1012 C250 1090 440 1230 548 1409 L763 1409 Z"/></svg></i><i style="width:3px">/</i><i style="width:6px">3</i><i style="width:3px">/</i><i style="width:6px">2</i><i style="width:6px">0</i><i style="width:6px">2</i><i style="width:6px">2</i></div>
<div class="t rg" style="left:378px;top:208px"><i class="g1" style="width:6px">1<svg class="o1" width="6" height="13" viewBox="0 -1919.5 1117.1 2420.4"><path transform="scale(1,-1)" fill="#000" d="M763 0 L583 0 L583 1147 C500 1070 330 960 76 838 L76 1012 C250 1090 440 1230 548 1409 L763 1409 Z"/></svg></i><i style="width:3px">/</i><i style="width:6px">3</i><i style="width:3px">/</i><i style="width:6px">2</i><i style="width:6px">0</i><i style="width:6px">2</i><i style="width:6px">2</i></div>
<div class="t rg" style="left:451px;top:208px"><i style="width:6px">2</i><i style="width:3px">/</i><i style="width:6px">7</i><i style="width:3px">/</i><i style="width:6px">2</i><i style="width:6px">0</i><i style="width:6px">2</i><i style="width:6px">3</i></div>
<div class="t rg" style="left:524px;top:208px"><i style="width:6px">4</i><i style="width:3px">/</i><i style="width:6px">7</i><i style="width:3px">/</i><i style="width:6px">2</i><i style="width:6px">0</i><i style="width:6px">2</i><i style="width:6px">3</i></div>
<div class="t rg" style="left:737px;top:208px"><i style="width:6px">3</i><i style="width:3px">/</i><i style="width:6px">2</i><i style="width:6px">8</i><i style="width:3px">/</i><i style="width:6px">2</i><i style="width:6px">0</i><i style="width:6px">2</i><i style="width:6px">2</i></div>
<div class="t rg" style="left:889px;top:208px"><i class="g1" style="width:6px">1<svg class="o1" width="6" height="13" viewBox="0 -1919.5 1117.1 2420.4"><path transform="scale(1,-1)" fill="#000" d="M763 0 L583 0 L583 1147 C500 1070 330 960 76 838 L76 1012 C250 1090 440 1230 548 1409 L763 1409 Z"/></svg></i><i style="width:3px">/</i><i style="width:6px">2</i><i style="width:3px">/</i><i style="width:6px">2</i><i style="width:6px">0</i><i style="width:6px">2</i><i style="width:6px">2</i></div>
<div class="t rg" style="left:962px;top:208px"><i class="g1" style="width:6px">1<svg class="o1" width="6" height="13" viewBox="0 -1919.5 1117.1 2420.4"><path transform="scale(1,-1)" fill="#000" d="M763 0 L583 0 L583 1147 C500 1070 330 960 76 838 L76 1012 C250 1090 440 1230 548 1409 L763 1409 Z"/></svg></i><i style="width:3px">/</i><i style="width:6px">3</i><i style="width:3px">/</i><i style="width:6px">2</i><i style="width:6px">0</i><i style="width:6px">2</i><i style="width:6px">2</i></div>
<div class="t rg" style="left:1108px;top:208px"><i style="width:6px">4</i><i style="width:3px">/</i><i style="width:6px">7</i><i style="width:3px">/</i><i style="width:6px">2</i><i style="width:6px">0</i><i style="width:6px">2</i><i style="width:6px">3</i></div>
<div class="t rg" style="left:31px;top:225px"><i class="g1" style="width:6px">1<svg class="o1" width="6" height="13" viewBox="0 -1919.5 1117.1 2420.4"><path transform="scale(1,-1)" fill="#000" d="M763 0 L583 0 L583 1147 C500 1070 330 960 76 838 L76 1012 C250 1090 440 1230 548 1409 L763 1409 Z"/></svg></i><i style="width:3px">.</i><i class="g1" style="width:6px">1<svg class="o1" width="6" height="13" viewBox="0 -1919.5 1117.1 2420.4"><path transform="scale(1,-1)" fill="#000" d="M763 0 L583 0 L583 1147 C500 1070 330 960 76 838 L76 1012 C250 1090 440 1230 548 1409 L763 1409 Z"/></svg></i><i style="width:3px">.</i><i class="g1" style="width:6px">1<svg class="o1" width="6" height="13" viewBox="0 -1919.5 1117.1 2420.4"><path transform="scale(1,-1)" fill="#000" d="M763 0 L583 0 L583 1147 C500 1070 330 960 76 838 L76 1012 C250 1090 440 1230 548 1409 L763 1409 Z"/></svg></i><i style="width:3px">.</i><i class="g1" style="width:6px">1<svg class="o1" width="6" height="13" viewBox="0 -1919.5 1117.1 2420.4"><path transform="scale(1,-1)" fill="#000" d="M763 0 L583 0 L583 1147 C500 1070 330 960 76 838 L76 1012 C250 1090 440 1230 548 1409 L763 1409 Z"/></svg></i></div>
<div class="t rg" style="left:186px;top:225px"><i class="g1" style="width:6px">1<svg class="o1" width="6" height="13" viewBox="0 -1919.5 1117.1 2420.4"><path transform="scale(1,-1)" fill="#000" d="M763 0 L583 0 L583 1147 C500 1070 330 960 76 838 L76 1012 C250 1090 440 1230 548 1409 L763 1409 Z"/></svg></i><i style="width:3px">.</i><i class="g1" style="width:6px">1<svg class="o1" width="6" height="13" viewBox="0 -1919.5 1117.1 2420.4"><path transform="scale(1,-1)" fill="#000" d="M763 0 L583 0 L583 1147 C500 1070 330 960 76 838 L76 1012 C250 1090 440 1230 548 1409 L763 1409 Z"/></svg></i><i style="width:3px">.</i><i class="g1" style="width:6px">1<svg class="o1" width="6" height="13" viewBox="0 -1919.5 1117.1 2420.4"><path transform="scale(1,-1)" fill="#000" d="M763 0 L583 0 L583 1147 C500 1070 330 960 76 838 L76 1012 C250 1090 440 1230 548 1409 L763 1409 Z"/></svg></i><i style="width:3px">.</i><i style="width:6px">2</i></div>
<div class="t rg" style="left:305px;top:225px"><i class="g1" style="width:6px">1<svg class="o1" width="6" height="13" viewBox="0 -1919.5 1117.1 2420.4"><path transform="scale(1,-1)" fill="#000" d="M763 0 L583 0 L583 1147 C500 1070 330 960 76 838 L76 1012 C250 1090 440 1230 548 1409 L763 1409 Z"/></svg></i><i style="width:3px">/</i><i style="width:6px">3</i><i style="width:3px">/</i><i style="width:6px">2</i><i style="width:6px">0</i><i style="width:6px">2</i><i style="width:6px">2</i></div>
<div class="t rg" style="left:378px;top:225px"><i style="width:6px">2</i><i style="width:3px">/</i><i class="g1" style="width:6px">1<svg class="o1" width="6" height="13" viewBox="0 -1919.5 1117.1 2420.4"><path transform="scale(1,-1)" fill="#000" d="M763 0 L583 0 L583 1147 C500 1070 330 960 76 838 L76 1012 C250 1090 440 1230 548 1409 L763 1409 Z"/></svg></i><i style="width:3px">/</i><i style="width:6px">2</i><i style="width:6px">0</i><i style="width:6px">2</i><i style="width:6px">2</i></div>
<div class="t rg" style="left:451px;top:225px"><i style="width:6px">2</i><i style="width:3px">/</i><i style="width:6px">7</i><i style="width:3px">/</i><i style="width:6px">2</i><i style="width:6px">0</i><i style="width:6px">2</i><i style="width:6px">3</i></div>
<div class="t rg" style="left:518px;top:225px"><i style="width:6px">2</i><i style="width:3px">/</i><i style="width:6px">2</i><i style="width:6px">8</i><i style="width:3px">/</i><i style="width:6px">2</i><i style="width:6px">0</i><i style="width:6px">2</i><i style="width:6px">2</i></div>
<div class="t rg" style="left:737px;top:225px"><i style="width:6px">3</i><i style="width:3px">/</i><i style="width:6px">2</i><i style="width:6px">8</i><i style="width:3px">/</i><i style="width:6px">2</i><i style="width:6px">0</i><i style="width:6px">2</i><i style="width:6px">2</i></div>
<div class="t rg" style="left:889px;top:225px"><i class="g1" style="width:6px">1<svg class="o1" width="6" height="13" viewBox="0 -1919.5 1117.1 2420.4"><path transform="scale(1,-1)" fill="#000" d="M763 0 L583 0 L583 1147 C500 1070 330 960 76 838 L76 1012 C250 1090 440 1230 548 1409 L763 1409 Z"/></svg></i><i style="width:3px">/</i><i style="width:6px">2</i><i style="width:3px">/</i><i style="width:6px">2</i><i style="width:6px">0</i><i style="width:6px">2</i><i style="width:6px">2</i></div>
<div class="t rg" style="left:956px;top:225px"><i style="width:6px">3</i><i style="width:3px">/</i><i class="g1" style="width:6px">1<svg class="o1" width="6" height="13" viewBox="0 -1919.5 1117.1 2420.4"><path transform="scale(1,-1)" fill="#000" d="M763 0 L583 0 L583 1147 C500 1070 330 960 76 838 L76 1012 C250 1090 440 1230 548 1409 L763 1409 Z"/></svg></i><i style="width:6px">5</i><i style="width:3px">/</i><i style="width:6px">2</i><i style="width:6px">0</i><i style="width:6px">2</i><i style="width:6px">2</i></div>
<div class="t rg" style="left:1108px;top:225px"><i style="width:6px">5</i><i style="width:3px">/</i><i style="width:6px">5</i><i style="width:3px">/</i><i style="width:6px">2</i><i style="width:6px">0</i><i style="width:6px">2</i><i style="width:6px">2</i></div>
<div class="t rg" style="left:31px;top:242px"><i class="g1" style="width:6px">1<svg class="o1" width="6" height="13" viewBox="0 -1919.5 1117.1 2420.4"><path transform="scale(1,-1)" fill="#000" d="M763 0 L583 0 L583 1147 C500 1070 330 960 76 838 L76 1012 C250 1090 440 1230 548 1409 L763 1409 Z"/></svg></i><i style="width:3px">.</i><i class="g1" style="width:6px">1<svg class="o1" width="6" height="13" viewBox="0 -1919.5 1117.1 2420.4"><path transform="scale(1,-1)" fill="#000" d="M763 0 L583 0 L583 1147 C500 1070 330 960 76 838 L76 1012 C250 1090 440 1230 548 1409 L763 1409 Z"/></svg></i><i style="width:3px">.</i><i class="g1" style="width:6px">1<svg class="o1" width="6" height="13" viewBox="0 -1919.5 1117.1 2420.4"><path transform="scale(1,-1)" fill="#000" d="M763 0 L583 0 L583 1147 C500 1070 330 960 76 838 L76 1012 C250 1090 440 1230 548 1409 L763 1409 Z"/></svg></i><i style="width:3px">.</i><i class="g1" style="width:6px">1<svg class="o1" width="6" height="13" viewBox="0 -1919.5 1117.1 2420.4"><path transform="scale(1,-1)" fill="#000" d="M763 0 L583 0 L583 1147 C500 1070 330 960 76 838 L76 1012 C250 1090 440 1230 548 1409 L763 1409 Z"/></svg></i></div>
<div class="t rg" style="left:186px;top:242px"><i class="g1" style="width:6px">1<svg class="o1" width="6" height="13" viewBox="0 -1919.5 1117.1 2420.4"><path transform="scale(1,-1)" fill="#000" d="M763 0 L583 0 L583 1147 C500 1070 330 960 76 838 L76 1012 C250 1090 440 1230 548 1409 L763 1409 Z"/></svg></i><i style="width:3px">.</i><i class="g1" style="width:6px">1<svg class="o1" width="6" height="13" viewBox="0 -1919.5 1117.1 2420.4"><path transform="scale(1,-1)" fill="#000" d="M763 0 L583 0 L583 1147 C500 1070 330 960 76 838 L76 1012 C250 1090 440 1230 548 1409 L763 1409 Z"/></svg></i><i style="width:3px">.</i><i class="g1" style="width:6px">1<svg class="o1" width="6" height="13" viewBox="0 -1919.5 1117.1 2420.4"><path transform="scale(1,-1)" fill="#000" d="M763 0 L583 0 L583 1147 C500 1070 330 960 76 838 L76 1012 C250 1090 440 1230 548 1409 L763 1409 Z"/></svg></i><i style="width:3px">.</i><i style="width:6px">3</i></div>
<div class="t rg" style="left:305px;top:242px"><i class="g1" style="width:6px">1<svg class="o1" width="6" height="13" viewBox="0 -1919.5 1117.1 2420.4"><path transform="scale(1,-1)" fill="#000" d="M763 0 L583 0 L583 1147 C500 1070 330 960 76 838 L76 1012 C250 1090 440 1230 548 1409 L763 1409 Z"/></svg></i><i style="width:3px">/</i><i style="width:6px">3</i><i style="width:3px">/</i><i style="width:6px">2</i><i style="width:6px">0</i><i style="width:6px">2</i><i style="width:6px">2</i></div>
<div class="t rg" style="left:378px;top:242px"><i style="width:6px">8</i><i style="width:3px">/</i><i class="g1" style="width:6px">1<svg class="o1" width="6" height="13" viewBox="0 -1919.5 1117.1 2420.4"><path transform="scale(1,-1)" fill="#000" d="M763 0 L583 0 L583 1147 C500 1070 330 960 76 838 L76 1012 C250 1090 440 1230 548 1409 L763 1409 Z"/></svg></i><i style="width:3px">/</i><i style="width:6px">2</i><i style="width:6px">0</i><i style="width:6px">2</i><i style="width:6px">2</i></div>
<div class="t rg" style="left:451px;top:242px"><i style="width:6px">2</i><i style="width:3px">/</i><i style="width:6px">7</i><i style="width:3px">/</i><i style="width:6px">2</i><i style="width:6px">0</i><i style="width:6px">2</i><i style="width:6px">3</i></div>
<div class="t rg" style="left:518px;top:242px"><i style="width:6px">8</i><i style="width:3px">/</i><i style="width:6px">2</i><i style="width:6px">6</i><i style="width:3px">/</i><i style="width:6px">2</i><i style="width:6px">0</i><i style="width:6px">2</i><i style="width:6px">2</i></div>
<div class="t rg" style="left:670px;top:242px"><i class="g1" style="width:6px">1<svg class="o1" width="6" height="13" viewBox="0 -1919.5 1117.1 2420.4"><path transform="scale(1,-1)" fill="#000" d="M763 0 L583 0 L583 1147 C500 1070 330 960 76 838 L76 1012 C250 1090 440 1230 548 1409 L763 1409 Z"/></svg></i><i style="width:3px">/</i><i style="width:6px">3</i><i style="width:3px">/</i><i style="width:6px">2</i><i style="width:6px">0</i><i style="width:6px">2</i><i style="width:6px">2</i></div>
<div class="t rg" style="left:737px;top:242px"><i style="width:6px">3</i><i style="width:3px">/</i><i style="width:6px">2</i><i style="width:6px">8</i><i style="width:3px">/</i><i style="width:6px">2</i><i style="width:6px">0</i><i style="width:6px">2</i><i style="width:6px">2</i></div>
<div class="t rg" style="left:810px;top:242px"><i class="g1" style="width:6px">1<svg class="o1" width="6" height="13" viewBox="0 -1919.5 1117.1 2420.4"><path transform="scale(1,-1)" fill="#000" d="M763 0 L583 0 L583 1147 C500 1070 330 960 76 838 L76 1012 C250 1090 440 1230 548 1409 L763 1409 Z"/></svg></i><i style="width:3px">/</i><i style="width:6px">2</i><i style="width:6px">8</i><i style="width:3px">/</i><i style="width:6px">2</i><i style="width:6px">0</i><i style="width:6px">2</i><i style="width:6px">2</i></div>
<div class="t rg" style="left:889px;top:242px"><i class="g1" style="width:6px">1<svg class="o1" width="6" height="13" viewBox="0 -1919.5 1117.1 2420.4"><path transform="scale(1,-1)" fill="#000" d="M763 0 L583 0 L583 1147 C500 1070 330 960 76 838 L76 1012 C250 1090 440 1230 548 1409 L763 1409 Z"/></svg></i><i style="width:3px">/</i><i style="width:6px">2</i><i style="width:3px">/</i><i style="width:6px">2</i><i style="width:6px">0</i><i style="width:6px">2</i><i style="width:6px">2</i></div>
<div class="t bd nv" style="left:12px;top:258px"><i style="width:8px">C</i><i style="width:7px">o</i><i style="width:7px">n</i><i style="width:4px">t</i><i style="width:5px">r</i><i style="width:7px">o</i><i style="width:3px">l</i><i style="width:3px">&nbsp;</i><i style="width:8px">A</i><i style="width:6px">c</i><i style="width:6px">c</i><i style="width:7px">o</i><i style="width:7px">u</i><i style="width:7px">n</i><i style="width:4px">t</i><i style="width:3px">:</i><i style="width:3px">&nbsp;</i><i class="g1" style="width:6px">1<svg class="o1" width="6" height="13" viewBox="0 -1919.5 1117.1 2420.4"><path transform="scale(1,-1)" fill="#000080" d="M790 0 L450 0 L450 1000 C370 940 240 900 110 870 L110 1090 C290 1150 410 1260 480 1409 L790 1409 Z"/></svg></i><i style="width:3px">.</i><i class="g1" style="width:6px">1<svg class="o1" width="6" height="13" viewBox="0 -1919.5 1117.1 2420.4"><path transform="scale(1,-1)" fill="#000080" d="M790 0 L450 0 L450 1000 C370 940 240 900 110 870 L110 1090 C290 1150 410 1260 480 1409 L790 1409 Z"/></svg></i><i style="width:3px">.</i><i style="width:6px">3</i><i style="width:3px">&nbsp;</i><i style="width:3px">/</i><i style="width:3px">&nbsp;</i><i class="g1" style="width:6px">1<svg class="o1" width="6" height="13" viewBox="0 -1919.5 1117.1 2420.4"><path transform="scale(1,-1)" fill="#000080" d="M790 0 L450 0 L450 1000 C370 940 240 900 110 870 L110 1090 C290 1150 410 1260 480 1409 L790 1409 Z"/></svg></i><i style="width:3px">.</i><i style="width:6px">E</i><i style="width:7px">N</i><i style="width:8px">G</i><i style="width:3px">.</i><i style="width:8px">C</i><i style="width:7px">L</i><i style="width:8px">A</i><i style="width:7px">R</i><i style="width:7px">K</i><i style="width:3px">&nbsp;</i><i style="width:6px">3</i><i style="width:7px">D</i></div>
<div class="t bd nv" style="left:12px;top:272px"><i style="width:10px">M</i><i style="width:7px">o</i><i style="width:7px">d</i><i style="width:7px">e</i><i style="width:3px">l</i><i style="width:3px">i</i><i style="width:7px">n</i><i style="width:7px">g</i></div>
<div class="t bd nv" style="left:305px;top:258px"><i class="g1" style="width:6px">1<svg class="o1" width="6" height="13" viewBox="0 -1919.5 1117.1 2420.4"><path transform="scale(1,-1)" fill="#000080" d="M790 0 L450 0 L450 1000 C370 940 240 900 110 870 L110 1090 C290 1150 410 1260 480 1409 L790 1409 Z"/></svg></i><i style="width:3px">/</i><i style="width:6px">3</i><i style="width:3px">/</i><i style="width:6px">2</i><i style="width:6px">0</i><i style="width:6px">2</i><i style="width:6px">2</i></div>
<div class="t bd nv" style="left:378px;top:258px"><i class="g1" style="width:6px">1<svg class="o1" width="6" height="13" viewBox="0 -1919.5 1117.1 2420.4"><path transform="scale(1,-1)" fill="#000080" d="M790 0 L450 0 L450 1000 C370 940 240 900 110 870 L110 1090 C290 1150 410 1260 480 1409 L790 1409 Z"/></svg></i><i style="width:3px">/</i><i style="width:6px">3</i><i style="width:3px">/</i><i style="width:6px">2</i><i style="width:6px">0</i><i style="width:6px">2</i><i style="width:6px">2</i></div>
<div class="t bd nv" style="left:445px;top:258px"><i style="width:6px">8</i><i style="width:3px">/</i><i class="g1" style="width:6px">1<svg class="o1" width="6" height="13" viewBox="0 -1919.5 1117.1 2420.4"><path transform="scale(1,-1)" fill="#000080" d="M790 0 L450 0 L450 1000 C370 940 240 900 110 870 L110 1090 C290 1150 410 1260 480 1409 L790 1409 Z"/></svg></i><i style="width:6px">2</i><i style="width:3px">/</i><i style="width:6px">2</i><i style="width:6px">0</i><i style="width:6px">2</i><i style="width:6px">2</i></div>
<div class="t bd nv" style="left:518px;top:258px"><i style="width:6px">3</i><i style="width:3px">/</i><i class="g1" style="width:6px">1<svg class="o1" width="6" height="13" viewBox="0 -1919.5 1117.1 2420.4"><path transform="scale(1,-1)" fill="#000080" d="M790 0 L450 0 L450 1000 C370 940 240 900 110 870 L110 1090 C290 1150 410 1260 480 1409 L790 1409 Z"/></svg></i><i style="width:6px">0</i><i style="width:3px">/</i><i style="width:6px">2</i><i style="width:6px">0</i><i style="width:6px">2</i><i style="width:6px">3</i></div>
<div class="t bd nv" style="left:597px;top:258px"><i class="g1" style="width:6px">1<svg class="o1" width="6" height="13" viewBox="0 -1919.5 1117.1 2420.4"><path transform="scale(1,-1)" fill="#000080" d="M790 0 L450 0 L450 1000 C370 940 240 900 110 870 L110 1090 C290 1150 410 1260 480 1409 L790 1409 Z"/></svg></i><i style="width:3px">/</i><i style="width:6px">3</i><i style="width:3px">/</i><i style="width:6px">2</i><i style="width:6px">0</i><i style="width:6px">2</i><i style="width:6px">2</i></div>
<div class="t bd nv" style="left:670px;top:258px"><i class="g1" style="width:6px">1<svg class="o1" width="6" height="13" viewBox="0 -1919.5 1117.1 2420.4"><path transform="scale(1,-1)" fill="#000080" d="M790 0 L450 0 L450 1000 C370 940 240 900 110 870 L110 1090 C290 1150 410 1260 480 1409 L790 1409 Z"/></svg></i><i style="width:3px">/</i><i style="width:6px">3</i><i style="width:3px">/</i><i style="width:6px">2</i><i style="width:6px">0</i><i style="width:6px">2</i><i style="width:6px">2</i></div>
<div class="t bd nv" style="left:737px;top:258px"><i style="width:6px">8</i><i style="width:3px">/</i><i class="g1" style="width:6px">1<svg class="o1" width="6" height="13" viewBox="0 -1919.5 1117.1 2420.4"><path transform="scale(1,-1)" fill="#000080" d="M790 0 L450 0 L450 1000 C370 940 240 900 110 870 L110 1090 C290 1150 410 1260 480 1409 L790 1409 Z"/></svg></i><i style="width:6px">2</i><i style="width:3px">/</i><i style="width:6px">2</i><i style="width:6px">0</i><i style="width:6px">2</i><i style="width:6px">2</i></div>
<div class="t bd nv" style="left:810px;top:258px"><i style="width:6px">8</i><i style="width:3px">/</i><i class="g1" style="width:6px">1<svg class="o1" width="6" height="13" viewBox="0 -1919.5 1117.1 2420.4"><path transform="scale(1,-1)" fill="#000080" d="M790 0 L450 0 L450 1000 C370 940 240 900 110 870 L110 1090 C290 1150 410 1260 480 1409 L790 1409 Z"/></svg></i><i style="width:6px">2</i><i style="width:3px">/</i><i style="width:6px">2</i><i style="width:6px">0</i><i style="width:6px">2</i><i style="width:6px">2</i></div>
<div class="t bd" style="left:21px;top:289px"><i style="width:10px">W</i><i style="width:7px">P</i><i class="g1" style="width:6px">_<b class="us" style="width:6px;background:#000"></b></i><i style="width:7px">N</i><i style="width:8px">O</i><i style="width:3px">:</i><i style="width:3px">&nbsp;</i><i class="g1" style="width:6px">1<svg class="o1" width="6" height="13" viewBox="0 -1919.5 1117.1 2420.4"><path transform="scale(1,-1)" fill="#000" d="M790 0 L450 0 L450 1000 C370 940 240 900 110 870 L110 1090 C290 1150 410 1260 480 1409 L790 1409 Z"/></svg></i><i style="width:3px">.</i><i class="g1" style="width:6px">1<svg class="o1" width="6" height="13" viewBox="0 -1919.5 1117.1 2420.4"><path transform="scale(1,-1)" fill="#000" d="M790 0 L450 0 L450 1000 C370 940 240 900 110 870 L110 1090 C290 1150 410 1260 480 1409 L790 1409 Z"/></svg></i><i style="width:3px">.</i><i style="width:6px">3</i><i style="width:3px">.</i><i class="g1" style="width:6px">1<svg class="o1" width="6" height="13" viewBox="0 -1919.5 1117.1 2420.4"><path transform="scale(1,-1)" fill="#000" d="M790 0 L450 0 L450 1000 C370 940 240 900 110 870 L110 1090 C290 1150 410 1260 480 1409 L790 1409 Z"/></svg></i><i style="width:3px">&nbsp;</i><i style="width:6px">3</i><i style="width:7px">D</i><i style="width:3px">&nbsp;</i><i style="width:10px">M</i><i style="width:7px">o</i><i style="width:7px">d</i><i style="width:7px">e</i><i style="width:3px">l</i><i style="width:3px">i</i><i style="width:7px">n</i><i style="width:7px">g</i><i style="width:3px">&nbsp;</i><i style="width:7px">Z</i><i style="width:7px">o</i><i style="width:7px">n</i><i style="width:7px">e</i><i style="width:3px">&nbsp;</i><i class="g1" style="width:6px">1<svg class="o1" width="6" height="13" viewBox="0 -1919.5 1117.1 2420.4"><path transform="scale(1,-1)" fill="#000" d="M790 0 L450 0 L450 1000 C370 940 240 900 110 870 L110 1090 C290 1150 410 1260 480 1409 L790 1409 Z"/></svg></i></div>
<div class="t bd" style="left:305px;top:289px"><i class="g1" style="width:6px">1<svg class="o1" width="6" height="13" viewBox="0 -1919.5 1117.1 2420.4"><path transform="scale(1,-1)" fill="#000" d="M790 0 L450 0 L450 1000 C370 940 240 900 110 870 L110 1090 C290 1150 410 1260 480 1409 L790 1409 Z"/></svg></i><i style="width:3px">/</i><i style="width:6px">3</i><i style="width:3px">/</i><i style="width:6px">2</i><i style="width:6px">0</i><i style="width:6px">2</i><i style="width:6px">2</i></div>
<div class="t bd" style="left:378px;top:289px"><i style="width:6px">8</i><i style="width:3px">/</i><i class="g1" style="width:6px">1<svg class="o1" width="6" height="13" viewBox="0 -1919.5 1117.1 2420.4"><path transform="scale(1,-1)" fill="#000" d="M790 0 L450 0 L450 1000 C370 940 240 900 110 870 L110 1090 C290 1150 410 1260 480 1409 L790 1409 Z"/></svg></i><i style="width:3px">/</i><i style="width:6px">2</i><i style="width:6px">0</i><i style="width:6px">2</i><i style="width:6px">2</i></div>
<div class="t bd" style="left:445px;top:289px"><i style="width:6px">6</i><i style="width:3px">/</i><i class="g1" style="width:6px">1<svg class="o1" width="6" height="13" viewBox="0 -1919.5 1117.1 2420.4"><path transform="scale(1,-1)" fill="#000" d="M790 0 L450 0 L450 1000 C370 940 240 900 110 870 L110 1090 C290 1150 410 1260 480 1409 L790 1409 Z"/></svg></i><i style="width:6px">7</i><i style="width:3px">/</i><i style="width:6px">2</i><i style="width:6px">0</i><i style="width:6px">2</i><i style="width:6px">2</i></div>
<div class="t bd" style="left:518px;top:289px"><i style="width:6px">3</i><i style="width:3px">/</i><i class="g1" style="width:6px">1<svg class="o1" width="6" height="13" viewBox="0 -1919.5 1117.1 2420.4"><path transform="scale(1,-1)" fill="#000" d="M790 0 L450 0 L450 1000 C370 940 240 900 110 870 L110 1090 C290 1150 410 1260 480 1409 L790 1409 Z"/></svg></i><i style="width:6px">0</i><i style="width:3px">/</i><i style="width:6px">2</i><i style="width:6px">0</i><i style="width:6px">2</i><i style="width:6px">3</i></div>
<div class="t bd" style="left:597px;top:289px"><i class="g1" style="width:6px">1<svg class="o1" width="6" height="13" viewBox="0 -1919.5 1117.1 2420.4"><path transform="scale(1,-1)" fill="#000" d="M790 0 L450 0 L450 1000 C370 940 240 900 110 870 L110 1090 C290 1150 410 1260 480 1409 L790 1409 Z"/></svg></i><i style="width:3px">/</i><i style="width:6px">3</i><i style="width:3px">/</i><i style="width:6px">2</i><i style="width:6px">0</i><i style="width:6px">2</i><i style="width:6px">2</i></div>
<div class="t bd" style="left:670px;top:289px"><i class="g1" style="width:6px">1<svg class="o1" width="6" height="13" viewBox="0 -1919.5 1117.1 2420.4"><path transform="scale(1,-1)" fill="#000" d="M790 0 L450 0 L450 1000 C370 940 240 900 110 870 L110 1090 C290 1150 410 1260 480 1409 L790 1409 Z"/></svg></i><i style="width:3px">/</i><i style="width:6px">3</i><i style="width:3px">/</i><i style="width:6px">2</i><i style="width:6px">0</i><i style="width:6px">2</i><i style="width:6px">2</i></div>
<div class="t bd" style="left:737px;top:289px"><i style="width:6px">6</i><i style="width:3px">/</i><i class="g1" style="width:6px">1<svg class="o1" width="6" height="13" viewBox="0 -1919.5 1117.1 2420.4"><path transform="scale(1,-1)" fill="#000" d="M790 0 L450 0 L450 1000 C370 940 240 900 110 870 L110 1090 C290 1150 410 1260 480 1409 L790 1409 Z"/></svg></i><i style="width:6px">7</i><i style="width:3px">/</i><i style="width:6px">2</i><i style="width:6px">0</i><i style="width:6px">2</i><i style="width:6px">2</i></div>
<div class="t bd" style="left:810px;top:289px"><i style="width:6px">8</i><i style="width:3px">/</i><i class="g1" style="width:6px">1<svg class="o1" width="6" height="13" viewBox="0 -1919.5 1117.1 2420.4"><path transform="scale(1,-1)" fill="#000" d="M790 0 L450 0 L450 1000 C370 940 240 900 110 870 L110 1090 C290 1150 410 1260 480 1409 L790 1409 Z"/></svg></i><i style="width:6px">2</i><i style="width:3px">/</i><i style="width:6px">2</i><i style="width:6px">0</i><i style="width:6px">2</i><i style="width:6px">2</i></div>
<div class="t rg" style="left:31px;top:309px"><i class="g1" style="width:6px">1<svg class="o1" width="6" height="13" viewBox="0 -1919.5 1117.1 2420.4"><path transform="scale(1,-1)" fill="#000" d="M763 0 L583 0 L583 1147 C500 1070 330 960 76 838 L76 1012 C250 1090 440 1230 548 1409 L763 1409 Z"/></svg></i><i style="width:3px">.</i><i class="g1" style="width:6px">1<svg class="o1" width="6" height="13" viewBox="0 -1919.5 1117.1 2420.4"><path transform="scale(1,-1)" fill="#000" d="M763 0 L583 0 L583 1147 C500 1070 330 960 76 838 L76 1012 C250 1090 440 1230 548 1409 L763 1409 Z"/></svg></i><i style="width:3px">.</i><i style="width:6px">3</i><i style="width:3px">.</i><i class="g1" style="width:6px">1<svg class="o1" width="6" height="13" viewBox="0 -1919.5 1117.1 2420.4"><path transform="scale(1,-1)" fill="#000" d="M763 0 L583 0 L583 1147 C500 1070 330 960 76 838 L76 1012 C250 1090 440 1230 548 1409 L763 1409 Z"/></svg></i></div>
<div class="t rg" style="left:186px;top:309px"><i class="g1" style="width:6px">1<svg class="o1" width="6" height="13" viewBox="0 -1919.5 1117.1 2420.4"><path transform="scale(1,-1)" fill="#000" d="M763 0 L583 0 L583 1147 C500 1070 330 960 76 838 L76 1012 C250 1090 440 1230 548 1409 L763 1409 Z"/></svg></i><i style="width:3px">.</i><i class="g1" style="width:6px">1<svg class="o1" width="6" height="13" viewBox="0 -1919.5 1117.1 2420.4"><path transform="scale(1,-1)" fill="#000" d="M763 0 L583 0 L583 1147 C500 1070 330 960 76 838 L76 1012 C250 1090 440 1230 548 1409 L763 1409 Z"/></svg></i><i style="width:3px">.</i><i style="width:6px">3</i><i style="width:3px">.</i><i class="g1" style="width:6px">1<svg class="o1" width="6" height="13" viewBox="0 -1919.5 1117.1 2420.4"><path transform="scale(1,-1)" fill="#000" d="M763 0 L583 0 L583 1147 C500 1070 330 960 76 838 L76 1012 C250 1090 440 1230 548 1409 L763 1409 Z"/></svg></i></div>
<div class="t rg" style="left:305px;top:309px"><i class="g1" style="width:6px">1<svg class="o1" width="6" height="13" viewBox="0 -1919.5 1117.1 2420.4"><path transform="scale(1,-1)" fill="#000" d="M763 0 L583 0 L583 1147 C500 1070 330 960 76 838 L76 1012 C250 1090 440 1230 548 1409 L763 1409 Z"/></svg></i><i style="width:3px">/</i><i style="width:6px">3</i><i style="width:3px">/</i><i style="width:6px">2</i><i style="width:6px">0</i><i style="width:6px">2</i><i style="width:6px">2</i></div>
<div class="t rg" style="left:378px;top:309px"><i style="width:6px">8</i><i style="width:3px">/</i><i class="g1" style="width:6px">1<svg class="o1" width="6" height="13" viewBox="0 -1919.5 1117.1 2420.4"><path transform="scale(1,-1)" fill="#000" d="M763 0 L583 0 L583 1147 C500 1070 330 960 76 838 L76 1012 C250 1090 440 1230 548 1409 L763 1409 Z"/></svg></i><i style="width:3px">/</i><i style="width:6px">2</i><i style="width:6px">0</i><i style="width:6px">2</i><i style="width:6px">2</i></div>
<div class="t rg" style="left:445px;top:309px"><i style="width:6px">6</i><i style="width:3px">/</i><i class="g1" style="width:6px">1<svg class="o1" width="6" height="13" viewBox="0 -1919.5 1117.1 2420.4"><path transform="scale(1,-1)" fill="#000" d="M763 0 L583 0 L583 1147 C500 1070 330 960 76 838 L76 1012 C250 1090 440 1230 548 1409 L763 1409 Z"/></svg></i><i style="width:6px">7</i><i style="width:3px">/</i><i style="width:6px">2</i><i style="width:6px">0</i><i style="width:6px">2</i><i style="width:6px">2</i></div>
<div class="t rg" style="left:518px;top:309px"><i style="width:6px">3</i><i style="width:3px">/</i><i class="g1" style="width:6px">1<svg class="o1" width="6" height="13" viewBox="0 -1919.5 1117.1 2420.4"><path transform="scale(1,-1)" fill="#000" d="M763 0 L583 0 L583 1147 C500 1070 330 960 76 838 L76 1012 C250 1090 440 1230 548 1409 L763 1409 Z"/></svg></i><i style="width:6px">0</i><i style="width:3px">/</i><i style="width:6px">2</i><i style="width:6px">0</i><i style="width:6px">2</i><i style="width:6px">3</i></div>
<div class="t rg" style="left:597px;top:309px"><i class="g1" style="width:6px">1<svg class="o1" width="6" height="13" viewBox="0 -1919.5 1117.1 2420.4"><path transform="scale(1,-1)" fill="#000" d="M763 0 L583 0 L583 1147 C500 1070 330 960 76 838 L76 1012 C250 1090 440 1230 548 1409 L763 1409 Z"/></svg></i><i style="width:3px">/</i><i style="width:6px">3</i><i style="width:3px">/</i><i style="width:6px">2</i><i style="width:6px">0</i><i style="width:6px">2</i><i style="width:6px">2</i></div>
<div class="t rg" style="left:670px;top:309px"><i class="g1" style="width:6px">1<svg class="o1" width="6" height="13" viewBox="0 -1919.5 1117.1 2420.4"><path transform="scale(1,-1)" fill="#000" d="M763 0 L583 0 L583 1147 C500 1070 330 960 76 838 L76 1012 C250 1090 440 1230 548 1409 L763 1409 Z"/></svg></i><i style="width:3px">/</i><i style="width:6px">3</i><i style="width:3px">/</i><i style="width:6px">2</i><i style="width:6px">0</i><i style="width:6px">2</i><i style="width:6px">2</i></div>
<div class="t rg" style="left:737px;top:309px"><i style="width:6px">6</i><i style="width:3px">/</i><i class="g1" style="width:6px">1<svg class="o1" width="6" height="13" viewBox="0 -1919.5 1117.1 2420.4"><path transform="scale(1,-1)" fill="#000" d="M763 0 L583 0 L583 1147 C500 1070 330 960 76 838 L76 1012 C250 1090 440 1230 548 1409 L763 1409 Z"/></svg></i><i style="width:6px">7</i><i style="width:3px">/</i><i style="width:6px">2</i><i style="width:6px">0</i><i style="width:6px">2</i><i style="width:6px">2</i></div>
<div class="t rg" style="left:810px;top:309px"><i style="width:6px">8</i><i style="width:3px">/</i><i class="g1" style="width:6px">1<svg class="o1" width="6" height="13" viewBox="0 -1919.5 1117.1 2420.4"><path transform="scale(1,-1)" fill="#000" d="M763 0 L583 0 L583 1147 C500 1070 330 960 76 838 L76 1012 C250 1090 440 1230 548 1409 L763 1409 Z"/></svg></i><i style="width:6px">2</i><i style="width:3px">/</i><i style="width:6px">2</i><i style="width:6px">0</i><i style="width:6px">2</i><i style="width:6px">2</i></div>
<div class="t bd" style="left:21px;top:325px"><i style="width:10px">W</i><i style="width:7px">P</i><i class="g1" style="width:6px">_<b class="us" style="width:6px;background:#000"></b></i><i style="width:7px">N</i><i style="width:8px">O</i><i style="width:3px">:</i><i style="width:3px">&nbsp;</i><i class="g1" style="width:6px">1<svg class="o1" width="6" height="13" viewBox="0 -1919.5 1117.1 2420.4"><path transform="scale(1,-1)" fill="#000" d="M790 0 L450 0 L450 1000 C370 940 240 900 110 870 L110 1090 C290 1150 410 1260 480 1409 L790 1409 Z"/></svg></i><i style="width:3px">.</i><i class="g1" style="width:6px">1<svg class="o1" width="6" height="13" viewBox="0 -1919.5 1117.1 2420.4"><path transform="scale(1,-1)" fill="#000" d="M790 0 L450 0 L450 1000 C370 940 240 900 110 870 L110 1090 C290 1150 410 1260 480 1409 L790 1409 Z"/></svg></i><i style="width:3px">.</i><i style="width:6px">3</i><i style="width:3px">.</i><i style="width:6px">2</i><i style="width:3px">&nbsp;</i><i style="width:6px">3</i><i style="width:7px">D</i><i style="width:3px">&nbsp;</i><i style="width:10px">M</i><i style="width:7px">o</i><i style="width:7px">d</i><i style="width:7px">e</i><i style="width:3px">l</i><i style="width:3px">i</i><i style="width:7px">n</i><i style="width:7px">g</i><i style="width:3px">&nbsp;</i><i style="width:7px">Z</i><i style="width:7px">o</i><i style="width:7px">n</i><i style="width:7px">e</i><i style="width:3px">&nbsp;</i><i style="width:6px">2</i></div>
<div class="t bd" style="left:305px;top:325px"><i class="g1" style="width:6px">1<svg class="o1" width="6" height="13" viewBox="0 -1919.5 1117.1 2420.4"><path transform="scale(1,-1)" fill="#000" d="M790 0 L450 0 L450 1000 C370 940 240 900 110 870 L110 1090 C290 1150 410 1260 480 1409 L790 1409 Z"/></svg></i><i style="width:3px">/</i><i style="width:6px">3</i><i style="width:3px">/</i><i style="width:6px">2</i><i style="width:6px">0</i><i style="width:6px">2</i><i style="width:6px">2</i></div>
<div class="t bd" style="left:378px;top:325px"><i class="g1" style="width:6px">1<svg class="o1" width="6" height="13" viewBox="0 -1919.5 1117.1 2420.4"><path transform="scale(1,-1)" fill="#000" d="M790 0 L450 0 L450 1000 C370 940 240 900 110 870 L110 1090 C290 1150 410 1260 480 1409 L790 1409 Z"/></svg></i><i style="width:3px">/</i><i style="width:6px">3</i><i style="width:3px">/</i><i style="width:6px">2</i><i style="width:6px">0</i><i style="width:6px">2</i><i style="width:6px">2</i></div>
<div class="t bd" style="left:445px;top:325px"><i style="width:6px">8</i><i style="width:3px">/</i><i class="g1" style="width:6px">1<svg class="o1" width="6" height="13" viewBox="0 -1919.5 1117.1 2420.4"><path transform="scale(1,-1)" fill="#000" d="M790 0 L450 0 L450 1000 C370 940 240 900 110 870 L110 1090 C290 1150 410 1260 480 1409 L790 1409 Z"/></svg></i><i style="width:6px">2</i><i style="width:3px">/</i><i style="width:6px">2</i><i style="width:6px">0</i><i style="width:6px">2</i><i style="width:6px">2</i></div>
<div class="t bd" style="left:518px;top:325px"><i style="width:6px">8</i><i style="width:3px">/</i><i class="g1" style="width:6px">1<svg class="o1" width="6" height="13" viewBox="0 -1919.5 1117.1 2420.4"><path transform="scale(1,-1)" fill="#000" d="M790 0 L450 0 L450 1000 C370 940 240 900 110 870 L110 1090 C290 1150 410 1260 480 1409 L790 1409 Z"/></svg></i><i style="width:6px">2</i><i style="width:3px">/</i><i style="width:6px">2</i><i style="width:6px">0</i><i style="width:6px">2</i><i style="width:6px">2</i></div>
<div class="t bd" style="left:597px;top:325px"><i class="g1" style="width:6px">1<svg class="o1" width="6" height="13" viewBox="0 -1919.5 1117.1 2420.4"><path transform="scale(1,-1)" fill="#000" d="M790 0 L450 0 L450 1000 C370 940 240 900 110 870 L110 1090 C290 1150 410 1260 480 1409 L790 1409 Z"/></svg></i><i style="width:3px">/</i><i style="width:6px">3</i><i style="width:3px">/</i><i style="width:6px">2</i><i style="width:6px">0</i><i style="width:6px">2</i><i style="width:6px">2</i></div>
<div class="t bd" style="left:670px;top:325px"><i class="g1" style="width:6px">1<svg class="o1" width="6" height="13" viewBox="0 -1919.5 1117.1 2420.4"><path transform="scale(1,-1)" fill="#000" d="M790 0 L450 0 L450 1000 C370 940 240 900 110 870 L110 1090 C290 1150 410 1260 480 1409 L790 1409 Z"/></svg></i><i style="width:3px">/</i><i style="width:6px">3</i><i style="width:3px">/</i><i style="width:6px">2</i><i style="width:6px">0</i><i style="width:6px">2</i><i style="width:6px">2</i></div>
<div class="t bd" style="left:737px;top:325px"><i style="width:6px">8</i><i style="width:3px">/</i><i class="g1" style="width:6px">1<svg class="o1" width="6" height="13" viewBox="0 -1919.5 1117.1 2420.4"><path transform="scale(1,-1)" fill="#000" d="M790 0 L450 0 L450 1000 C370 940 240 900 110 870 L110 1090 C290 1150 410 1260 480 1409 L790 1409 Z"/></svg></i><i style="width:6px">2</i><i style="width:3px">/</i><i style="width:6px">2</i><i style="width:6px">0</i><i style="width:6px">2</i><i style="width:6px">2</i></div>
<div class="t bd" style="left:810px;top:325px"><i style="width:6px">8</i><i style="width:3px">/</i><i class="g1" style="width:6px">1<svg class="o1" width="6" height="13" viewBox="0 -1919.5 1117.1 2420.4"><path transform="scale(1,-1)" fill="#000" d="M790 0 L450 0 L450 1000 C370 940 240 900 110 870 L110 1090 C290 1150 410 1260 480 1409 L790 1409 Z"/></svg></i><i style="width:6px">2</i><i style="width:3px">/</i><i style="width:6px">2</i><i style="width:6px">0</i><i style="width:6px">2</i><i style="width:6px">2</i></div>
<div class="t rg" style="left:31px;top:345px"><i class="g1" style="width:6px">1<svg class="o1" width="6" height="13" viewBox="0 -1919.5 1117.1 2420.4"><path transform="scale(1,-1)" fill="#000" d="M763 0 L583 0 L583 1147 C500 1070 330 960 76 838 L76 1012 C250 1090 440 1230 548 1409 L763 1409 Z"/></svg></i><i style="width:3px">.</i><i class="g1" style="width:6px">1<svg class="o1" width="6" height="13" viewBox="0 -1919.5 1117.1 2420.4"><path transform="scale(1,-1)" fill="#000" d="M763 0 L583 0 L583 1147 C500 1070 330 960 76 838 L76 1012 C250 1090 440 1230 548 1409 L763 1409 Z"/></svg></i><i style="width:3px">.</i><i style="width:6px">3</i><i style="width:3px">.</i><i style="width:6px">2</i></div>
<div class="t rg" style="left:186px;top:345px"><i class="g1" style="width:6px">1<svg class="o1" width="6" height="13" viewBox="0 -1919.5 1117.1 2420.4"><path transform="scale(1,-1)" fill="#000" d="M763 0 L583 0 L583 1147 C500 1070 330 960 76 838 L76 1012 C250 1090 440 1230 548 1409 L763 1409 Z"/></svg></i><i style="width:3px">.</i><i class="g1" style="width:6px">1<svg class="o1" width="6" height="13" viewBox="0 -1919.5 1117.1 2420.4"><path transform="scale(1,-1)" fill="#000" d="M763 0 L583 0 L583 1147 C500 1070 330 960 76 838 L76 1012 C250 1090 440 1230 548 1409 L763 1409 Z"/></svg></i><i style="width:3px">.</i><i style="width:6px">3</i><i style="width:3px">.</i><i style="width:6px">2</i></div>
<div class="t rg" style="left:305px;top:345px"><i class="g1" style="width:6px">1<svg class="o1" width="6" height="13" viewBox="0 -1919.5 1117.1 2420.4"><path transform="scale(1,-1)" fill="#000" d="M763 0 L583 0 L583 1147 C500 1070 330 960 76 838 L76 1012 C250 1090 440 1230 548 1409 L763 1409 Z"/></svg></i><i style="width:3px">/</i><i style="width:6px">3</i><i style="width:3px">/</i><i style="width:6px">2</i><i style="width:6px">0</i><i style="width:6px">2</i><i style="width:6px">2</i></div>
<div class="t rg" style="left:378px;top:345px"><i class="g1" style="width:6px">1<svg class="o1" width="6" height="13" viewBox="0 -1919.5 1117.1 2420.4"><path transform="scale(1,-1)" fill="#000" d="M763 0 L583 0 L583 1147 C500 1070 330 960 76 838 L76 1012 C250 1090 440 1230 548 1409 L763 1409 Z"/></svg></i><i style="width:3px">/</i><i style="width:6px">3</i><i style="width:3px">/</i><i style="width:6px">2</i><i style="width:6px">0</i><i style="width:6px">2</i><i style="width:6px">2</i></div>
<div class="t rg" style="left:445px;top:345px"><i style="width:6px">8</i><i style="width:3px">/</i><i class="g1" style="width:6px">1<svg class="o1" width="6" height="13" viewBox="0 -1919.5 1117.1 2420.4"><path transform="scale(1,-1)" fill="#000" d="M763 0 L583 0 L583 1147 C500 1070 330 960 76 838 L76 1012 C250 1090 440 1230 548 1409 L763 1409 Z"/></svg></i><i style="width:6px">2</i><i style="width:3px">/</i><i style="width:6px">2</i><i style="width:6px">0</i><i style="width:6px">2</i><i style="width:6px">2</i></div>
<div class="t rg" style="left:518px;top:345px"><i style="width:6px">8</i><i style="width:3px">/</i><i class="g1" style="width:6px">1<svg class="o1" width="6" height="13" viewBox="0 -1919.5 1117.1 2420.4"><path transform="scale(1,-1)" fill="#000" d="M763 0 L583 0 L583 1147 C500 1070 330 960 76 838 L76 1012 C250 1090 440 1230 548 1409 L763 1409 Z"/></svg></i><i style="width:6px">2</i><i style="width:3px">/</i><i style="width:6px">2</i><i style="width:6px">0</i><i style="width:6px">2</i><i style="width:6px">2</i></div>
<div class="t rg" style="left:597px;top:345px"><i class="g1" style="width:6px">1<svg class="o1" width="6" height="13" viewBox="0 -1919.5 1117.1 2420.4"><path transform="scale(1,-1)" fill="#000" d="M763 0 L583 0 L583 1147 C500 1070 330 960 76 838 L76 1012 C250 1090 440 1230 548 1409 L763 1409 Z"/></svg></i><i style="width:3px">/</i><i style="width:6px">3</i><i style="width:3px">/</i><i style="width:6px">2</i><i style="width:6px">0</i><i style="width:6px">2</i><i style="width:6px">2</i></div>
<div class="t rg" style="left:670px;top:345px"><i class="g1" style="width:6px">1<svg class="o1" width="6" height="13" viewBox="0 -1919.5 1117.1 2420.4"><path transform="scale(1,-1)" fill="#000" d="M763 0 L583 0 L583 1147 C500 1070 330 960 76 838 L76 1012 C250 1090 440 1230 548 1409 L763 1409 Z"/></svg></i><i style="width:3px">/</i><i style="width:6px">3</i><i style="width:3px">/</i><i style="width:6px">2</i><i style="width:6px">0</i><i style="width:6px">2</i><i style="width:6px">2</i></div>
<div class="t rg" style="left:737px;top:345px"><i style="width:6px">8</i><i style="width:3px">/</i><i class="g1" style="width:6px">1<svg class="o1" width="6" height="13" viewBox="0 -1919.5 1117.1 2420.4"><path transform="scale(1,-1)" fill="#000" d="M763 0 L583 0 L583 1147 C500 1070 330 960 76 838 L76 1012 C250 1090 440 1230 548 1409 L763 1409 Z"/></svg></i><i style="width:6px">2</i><i style="width:3px">/</i><i style="width:6px">2</i><i style="width:6px">0</i><i style="width:6px">2</i><i style="width:6px">2</i></div>
<div class="t rg" style="left:810px;top:345px"><i style="width:6px">8</i><i style="width:3px">/</i><i class="g1" style="width:6px">1<svg class="o1" width="6" height="13" viewBox="0 -1919.5 1117.1 2420.4"><path transform="scale(1,-1)" fill="#000" d="M763 0 L583 0 L583 1147 C500 1070 330 960 76 838 L76 1012 C250 1090 440 1230 548 1409 L763 1409 Z"/></svg></i><i style="width:6px">2</i><i style="width:3px">/</i><i style="width:6px">2</i><i style="width:6px">0</i><i style="width:6px">2</i><i style="width:6px">2</i></div>
<div class="t bd nv" style="left:12px;top:362px"><i style="width:8px">C</i><i style="width:7px">o</i><i style="width:7px">n</i><i style="width:4px">t</i><i style="width:5px">r</i><i style="width:7px">o</i><i style="width:3px">l</i><i style="width:3px">&nbsp;</i><i style="width:8px">A</i><i style="width:6px">c</i><i style="width:6px">c</i><i style="width:7px">o</i><i style="width:7px">u</i><i style="width:7px">n</i><i style="width:4px">t</i><i style="width:3px">:</i><i style="width:3px">&nbsp;</i><i class="g1" style="width:6px">1<svg class="o1" width="6" height="13" viewBox="0 -1919.5 1117.1 2420.4"><path transform="scale(1,-1)" fill="#000080" d="M790 0 L450 0 L450 1000 C370 940 240 900 110 870 L110 1090 C290 1150 410 1260 480 1409 L790 1409 Z"/></svg></i><i style="width:3px">.</i><i class="g1" style="width:6px">1<svg class="o1" width="6" height="13" viewBox="0 -1919.5 1117.1 2420.4"><path transform="scale(1,-1)" fill="#000080" d="M790 0 L450 0 L450 1000 C370 940 240 900 110 870 L110 1090 C290 1150 410 1260 480 1409 L790 1409 Z"/></svg></i><i style="width:3px">.</i><i style="width:6px">4</i><i style="width:3px">&nbsp;</i><i style="width:3px">/</i><i style="width:3px">&nbsp;</i><i class="g1" style="width:6px">1<svg class="o1" width="6" height="13" viewBox="0 -1919.5 1117.1 2420.4"><path transform="scale(1,-1)" fill="#000080" d="M790 0 L450 0 L450 1000 C370 940 240 900 110 870 L110 1090 C290 1150 410 1260 480 1409 L790 1409 Z"/></svg></i><i style="width:3px">.</i><i style="width:6px">E</i><i style="width:7px">N</i><i style="width:8px">G</i><i style="width:3px">.</i><i style="width:7px">S</i><i style="width:8px">C</i><i style="width:7px">H</i><i style="width:7px">U</i><i style="width:7px">L</i><i style="width:7px">T</i><i style="width:7px">Z</i><i style="width:3px">&nbsp;</i><i style="width:6px">2</i><i style="width:7px">d</i></div>
<div class="t bd nv" style="left:12px;top:376px"><i style="width:8px">C</i><i style="width:7px">o</i><i style="width:7px">n</i><i style="width:7px">s</i><i style="width:4px">t</i><i style="width:3px">&nbsp;</i><i style="width:7px">D</i><i style="width:10px">w</i><i style="width:7px">g</i><i style="width:3px">&nbsp;</i><i style="width:6px">E</i><i style="width:6px">x</i><i style="width:4px">t</i><i style="width:5px">r</i><i style="width:6px">a</i><i style="width:6px">c</i><i style="width:4px">t</i><i style="width:3px">i</i><i style="width:7px">o</i><i style="width:7px">n</i><i style="width:3px">&nbsp;</i><i style="width:4px">(</i><i style="width:7px">U</i><i style="width:7px">n</i><i style="width:3px">i</i><i style="width:4px">t</i><i style="width:7px">s</i></div>
<div class="t bd nv" style="left:299px;top:362px"><i style="width:6px">6</i><i style="width:3px">/</i><i style="width:6px">2</i><i style="width:6px">0</i><i style="width:3px">/</i><i style="width:6px">2</i><i style="width:6px">0</i><i style="width:6px">2</i><i style="width:6px">2</i></div>
<div class="t bd nv" style="left:372px;top:362px"><i style="width:6px">6</i><i style="width:3px">/</i><i style="width:6px">2</i><i style="width:6px">0</i><i style="width:3px">/</i><i style="width:6px">2</i><i style="width:6px">0</i><i style="width:6px">2</i><i style="width:6px">2</i></div>
<div class="t bd nv" style="left:451px;top:362px"><i style="width:6px">3</i><i style="width:3px">/</i><i style="width:6px">9</i><i style="width:3px">/</i><i style="width:6px">2</i><i style="width:6px">0</i><i style="width:6px">2</i><i style="width:6px">3</i></div>
<div class="t bd nv" style="left:524px;top:362px"><i style="width:6px">5</i><i style="width:3px">/</i><i style="width:6px">5</i><i style="width:3px">/</i><i style="width:6px">2</i><i style="width:6px">0</i><i style="width:6px">2</i><i style="width:6px">3</i></div>
<div class="t bd nv" style="left:591px;top:362px"><i style="width:6px">6</i><i style="width:3px">/</i><i style="width:6px">2</i><i style="width:6px">0</i><i style="width:3px">/</i><i style="width:6px">2</i><i style="width:6px">0</i><i style="width:6px">2</i><i style="width:6px">2</i></div>
<div class="t bd nv" style="left:664px;top:362px"><i style="width:6px">8</i><i style="width:3px">/</i><i class="g1" style="width:6px">1<svg class="o1" width="6" height="13" viewBox="0 -1919.5 1117.1 2420.4"><path transform="scale(1,-1)" fill="#000080" d="M790 0 L450 0 L450 1000 C370 940 240 900 110 870 L110 1090 C290 1150 410 1260 480 1409 L790 1409 Z"/></svg></i><i style="width:6px">5</i><i style="width:3px">/</i><i style="width:6px">2</i><i style="width:6px">0</i><i style="width:6px">2</i><i style="width:6px">2</i></div>
<div class="t bd nv" style="left:737px;top:362px"><i style="width:6px">2</i><i style="width:3px">/</i><i style="width:6px">2</i><i style="width:6px">3</i><i style="width:3px">/</i><i style="width:6px">2</i><i style="width:6px">0</i><i style="width:6px">2</i><i style="width:6px">3</i></div>
<div class="t bd nv" style="left:810px;top:362px"><i class="g1" style="width:6px">1<svg class="o1" width="6" height="13" viewBox="0 -1919.5 1117.1 2420.4"><path transform="scale(1,-1)" fill="#000080" d="M790 0 L450 0 L450 1000 C370 940 240 900 110 870 L110 1090 C290 1150 410 1260 480 1409 L790 1409 Z"/></svg></i><i class="g1" style="width:6px">1<svg class="o1" width="6" height="13" viewBox="0 -1919.5 1117.1 2420.4"><path transform="scale(1,-1)" fill="#000080" d="M790 0 L450 0 L450 1000 C370 940 240 900 110 870 L110 1090 C290 1150 410 1260 480 1409 L790 1409 Z"/></svg></i><i style="width:3px">/</i><i style="width:6px">4</i><i style="width:3px">/</i><i style="width:6px">2</i><i style="width:6px">0</i><i style="width:6px">2</i><i style="width:6px">2</i></div>
<div class="t bd" style="left:21px;top:392px"><i style="width:10px">W</i><i style="width:7px">P</i><i class="g1" style="width:6px">_<b class="us" style="width:6px;background:#000"></b></i><i style="width:7px">N</i><i style="width:8px">O</i><i style="width:3px">:</i><i style="width:3px">&nbsp;</i><i class="g1" style="width:6px">1<svg class="o1" width="6" height="13" viewBox="0 -1919.5 1117.1 2420.4"><path transform="scale(1,-1)" fill="#000" d="M790 0 L450 0 L450 1000 C370 940 240 900 110 870 L110 1090 C290 1150 410 1260 480 1409 L790 1409 Z"/></svg></i><i style="width:3px">.</i><i class="g1" style="width:6px">1<svg class="o1" width="6" height="13" viewBox="0 -1919.5 1117.1 2420.4"><path transform="scale(1,-1)" fill="#000" d="M790 0 L450 0 L450 1000 C370 940 240 900 110 870 L110 1090 C290 1150 410 1260 480 1409 L790 1409 Z"/></svg></i><i style="width:3px">.</i><i style="width:6px">4</i><i style="width:3px">.</i><i class="g1" style="width:6px">1<svg class="o1" width="6" height="13" viewBox="0 -1919.5 1117.1 2420.4"><path transform="scale(1,-1)" fill="#000" d="M790 0 L450 0 L450 1000 C370 940 240 900 110 870 L110 1090 C290 1150 410 1260 480 1409 L790 1409 Z"/></svg></i><i style="width:6px">0</i><i class="g1" style="width:6px">1<svg class="o1" width="6" height="13" viewBox="0 -1919.5 1117.1 2420.4"><path transform="scale(1,-1)" fill="#000" d="M790 0 L450 0 L450 1000 C370 940 240 900 110 870 L110 1090 C290 1150 410 1260 480 1409 L790 1409 Z"/></svg></i><i style="width:3px">&nbsp;</i><i style="width:6px">2</i><i style="width:7px">D</i><i style="width:3px">&nbsp;</i><i style="width:6px">E</i><i style="width:6px">x</i><i style="width:4px">t</i><i style="width:5px">r</i><i style="width:6px">a</i><i style="width:6px">c</i><i style="width:4px">t</i><i style="width:3px">i</i><i style="width:7px">o</i><i style="width:7px">n</i><i style="width:3px">&nbsp;</i><i style="width:7px">U</i><i style="width:7px">n</i><i style="width:3px">i</i><i style="width:4px">t</i><i style="width:3px">&nbsp;</i><i class="g1" style="width:6px">1<svg class="o1" width="6" height="13" viewBox="0 -1919.5 1117.1 2420.4"><path transform="scale(1,-1)" fill="#000" d="M790 0 L450 0 L450 1000 C370 940 240 900 110 870 L110 1090 C290 1150 410 1260 480 1409 L790 1409 Z"/></svg></i><i style="width:6px">0</i><i class="g1" style="width:6px">1<svg class="o1" width="6" height="13" viewBox="0 -1919.5 1117.1 2420.4"><path transform="scale(1,-1)" fill="#000" d="M790 0 L450 0 L450 1000 C370 940 240 900 110 870 L110 1090 C290 1150 410 1260 480 1409 L790 1409 Z"/></svg></i></div>
<div class="t bd" style="left:299px;top:392px"><i class="g1" style="width:6px">1<svg class="o1" width="6" height="13" viewBox="0 -1919.5 1117.1 2420.4"><path transform="scale(1,-1)" fill="#000" d="M790 0 L450 0 L450 1000 C370 940 240 900 110 870 L110 1090 C290 1150 410 1260 480 1409 L790 1409 Z"/></svg></i><i style="width:3px">/</i><i class="g1" style="width:6px">1<svg class="o1" width="6" height="13" viewBox="0 -1919.5 1117.1 2420.4"><path transform="scale(1,-1)" fill="#000" d="M790 0 L450 0 L450 1000 C370 940 240 900 110 870 L110 1090 C290 1150 410 1260 480 1409 L790 1409 Z"/></svg></i><i style="width:6px">3</i><i style="width:3px">/</i><i style="width:6px">2</i><i style="width:6px">0</i><i style="width:6px">2</i><i style="width:6px">3</i></div>
<div class="t bd" style="left:372px;top:392px"><i style="width:6px">2</i><i style="width:3px">/</i><i class="g1" style="width:6px">1<svg class="o1" width="6" height="13" viewBox="0 -1919.5 1117.1 2420.4"><path transform="scale(1,-1)" fill="#000" d="M790 0 L450 0 L450 1000 C370 940 240 900 110 870 L110 1090 C290 1150 410 1260 480 1409 L790 1409 Z"/></svg></i><i style="width:6px">3</i><i style="width:3px">/</i><i style="width:6px">2</i><i style="width:6px">0</i><i style="width:6px">2</i><i style="width:6px">3</i></div>
<div class="t bd" style="left:445px;top:392px"><i style="width:6px">2</i><i style="width:3px">/</i><i style="width:6px">2</i><i style="width:6px">3</i><i style="width:3px">/</i><i style="width:6px">2</i><i style="width:6px">0</i><i style="width:6px">2</i><i style="width:6px">3</i></div>
<div class="t bd" style="left:524px;top:392px"><i style="width:6px">5</i><i style="width:3px">/</i><i style="width:6px">5</i><i style="width:3px">/</i><i style="width:6px">2</i><i style="width:6px">0</i><i style="width:6px">2</i><i style="width:6px">3</i></div>
<div class="t bd" style="left:591px;top:392px"><i class="g1" style="width:6px">1<svg class="o1" width="6" height="13" viewBox="0 -1919.5 1117.1 2420.4"><path transform="scale(1,-1)" fill="#000" d="M790 0 L450 0 L450 1000 C370 940 240 900 110 870 L110 1090 C290 1150 410 1260 480 1409 L790 1409 Z"/></svg></i><i style="width:3px">/</i><i class="g1" style="width:6px">1<svg class="o1" width="6" height="13" viewBox="0 -1919.5 1117.1 2420.4"><path transform="scale(1,-1)" fill="#000" d="M790 0 L450 0 L450 1000 C370 940 240 900 110 870 L110 1090 C290 1150 410 1260 480 1409 L790 1409 Z"/></svg></i><i style="width:6px">3</i><i style="width:3px">/</i><i style="width:6px">2</i><i style="width:6px">0</i><i style="width:6px">2</i><i style="width:6px">3</i></div>
<div class="t bd" style="left:664px;top:392px"><i style="width:6px">8</i><i style="width:3px">/</i><i class="g1" style="width:6px">1<svg class="o1" width="6" height="13" viewBox="0 -1919.5 1117.1 2420.4"><path transform="scale(1,-1)" fill="#000" d="M790 0 L450 0 L450 1000 C370 940 240 900 110 870 L110 1090 C290 1150 410 1260 480 1409 L790 1409 Z"/></svg></i><i style="width:6px">5</i><i style="width:3px">/</i><i style="width:6px">2</i><i style="width:6px">0</i><i style="width:6px">2</i><i style="width:6px">2</i></div>
<div class="t bd" style="left:737px;top:392px"><i style="width:6px">2</i><i style="width:3px">/</i><i style="width:6px">2</i><i style="width:6px">3</i><i style="width:3px">/</i><i style="width:6px">2</i><i style="width:6px">0</i><i style="width:6px">2</i><i style="width:6px">3</i></div>
<div class="t bd" style="left:810px;top:392px"><i class="g1" style="width:6px">1<svg class="o1" width="6" height="13" viewBox="0 -1919.5 1117.1 2420.4"><path transform="scale(1,-1)" fill="#000" d="M790 0 L450 0 L450 1000 C370 940 240 900 110 870 L110 1090 C290 1150 410 1260 480 1409 L790 1409 Z"/></svg></i><i class="g1" style="width:6px">1<svg class="o1" width="6" height="13" viewBox="0 -1919.5 1117.1 2420.4"><path transform="scale(1,-1)" fill="#000" d="M790 0 L450 0 L450 1000 C370 940 240 900 110 870 L110 1090 C290 1150 410 1260 480 1409 L790 1409 Z"/></svg></i><i style="width:3px">/</i><i style="width:6px">4</i><i style="width:3px">/</i><i style="width:6px">2</i><i style="width:6px">0</i><i style="width:6px">2</i><i style="width:6px">2</i></div>
<div class="t rg" style="left:31px;top:412px"><i class="g1" style="width:6px">1<svg class="o1" width="6" height="13" viewBox="0 -1919.5 1117.1 2420.4"><path transform="scale(1,-1)" fill="#000" d="M763 0 L583 0 L583 1147 C500 1070 330 960 76 838 L76 1012 C250 1090 440 1230 548 1409 L763 1409 Z"/></svg></i><i style="width:3px">.</i><i class="g1" style="width:6px">1<svg class="o1" width="6" height="13" viewBox="0 -1919.5 1117.1 2420.4"><path transform="scale(1,-1)" fill="#000" d="M763 0 L583 0 L583 1147 C500 1070 330 960 76 838 L76 1012 C250 1090 440 1230 548 1409 L763 1409 Z"/></svg></i><i style="width:3px">.</i><i style="width:6px">4</i><i style="width:3px">.</i><i class="g1" style="width:6px">1<svg class="o1" width="6" height="13" viewBox="0 -1919.5 1117.1 2420.4"><path transform="scale(1,-1)" fill="#000" d="M763 0 L583 0 L583 1147 C500 1070 330 960 76 838 L76 1012 C250 1090 440 1230 548 1409 L763 1409 Z"/></svg></i><i style="width:6px">0</i><i class="g1" style="width:6px">1<svg class="o1" width="6" height="13" viewBox="0 -1919.5 1117.1 2420.4"><path transform="scale(1,-1)" fill="#000" d="M763 0 L583 0 L583 1147 C500 1070 330 960 76 838 L76 1012 C250 1090 440 1230 548 1409 L763 1409 Z"/></svg></i></div>
<div class="t rg" style="left:186px;top:412px"><i class="g1" style="width:6px">1<svg class="o1" width="6" height="13" viewBox="0 -1919.5 1117.1 2420.4"><path transform="scale(1,-1)" fill="#000" d="M763 0 L583 0 L583 1147 C500 1070 330 960 76 838 L76 1012 C250 1090 440 1230 548 1409 L763 1409 Z"/></svg></i><i style="width:3px">.</i><i class="g1" style="width:6px">1<svg class="o1" width="6" height="13" viewBox="0 -1919.5 1117.1 2420.4"><path transform="scale(1,-1)" fill="#000" d="M763 0 L583 0 L583 1147 C500 1070 330 960 76 838 L76 1012 C250 1090 440 1230 548 1409 L763 1409 Z"/></svg></i><i style="width:3px">.</i><i style="width:6px">4</i><i style="width:3px">.</i><i class="g1" style="width:6px">1<svg class="o1" width="6" height="13" viewBox="0 -1919.5 1117.1 2420.4"><path transform="scale(1,-1)" fill="#000" d="M763 0 L583 0 L583 1147 C500 1070 330 960 76 838 L76 1012 C250 1090 440 1230 548 1409 L763 1409 Z"/></svg></i><i style="width:6px">0</i><i class="g1" style="width:6px">1<svg class="o1" width="6" height="13" viewBox="0 -1919.5 1117.1 2420.4"><path transform="scale(1,-1)" fill="#000" d="M763 0 L583 0 L583 1147 C500 1070 330 960 76 838 L76 1012 C250 1090 440 1230 548 1409 L763 1409 Z"/></svg></i></div>
<div class="t rg" style="left:299px;top:412px"><i class="g1" style="width:6px">1<svg class="o1" width="6" height="13" viewBox="0 -1919.5 1117.1 2420.4"><path transform="scale(1,-1)" fill="#000" d="M763 0 L583 0 L583 1147 C500 1070 330 960 76 838 L76 1012 C250 1090 440 1230 548 1409 L763 1409 Z"/></svg></i><i style="width:3px">/</i><i class="g1" style="width:6px">1<svg class="o1" width="6" height="13" viewBox="0 -1919.5 1117.1 2420.4"><path transform="scale(1,-1)" fill="#000" d="M763 0 L583 0 L583 1147 C500 1070 330 960 76 838 L76 1012 C250 1090 440 1230 548 1409 L763 1409 Z"/></svg></i><i style="width:6px">3</i><i style="width:3px">/</i><i style="width:6px">2</i><i style="width:6px">0</i><i style="width:6px">2</i><i style="width:6px">3</i></div>
<div class="t rg" style="left:372px;top:412px"><i style="width:6px">2</i><i style="width:3px">/</i><i class="g1" style="width:6px">1<svg class="o1" width="6" height="13" viewBox="0 -1919.5 1117.1 2420.4"><path transform="scale(1,-1)" fill="#000" d="M763 0 L583 0 L583 1147 C500 1070 330 960 76 838 L76 1012 C250 1090 440 1230 548 1409 L763 1409 Z"/></svg></i><i style="width:6px">3</i><i style="width:3px">/</i><i style="width:6px">2</i><i style="width:6px">0</i><i style="width:6px">2</i><i style="width:6px">3</i></div>
<div class="t rg" style="left:445px;top:412px"><i style="width:6px">2</i><i style="width:3px">/</i><i style="width:6px">2</i><i style="width:6px">3</i><i style="width:3px">/</i><i style="width:6px">2</i><i style="width:6px">0</i><i style="width:6px">2</i><i style="width:6px">3</i></div>
<div class="t rg" style="left:524px;top:412px"><i style="width:6px">5</i><i style="width:3px">/</i><i style="width:6px">5</i><i style="width:3px">/</i><i style="width:6px">2</i><i style="width:6px">0</i><i style="width:6px">2</i><i style="width:6px">3</i></div>
<div class="t rg" style="left:591px;top:412px"><i class="g1" style="width:6px">1<svg class="o1" width="6" height="13" viewBox="0 -1919.5 1117.1 2420.4"><path transform="scale(1,-1)" fill="#000" d="M763 0 L583 0 L583 1147 C500 1070 330 960 76 838 L76 1012 C250 1090 440 1230 548 1409 L763 1409 Z"/></svg></i><i style="width:3px">/</i><i class="g1" style="width:6px">1<svg class="o1" width="6" height="13" viewBox="0 -1919.5 1117.1 2420.4"><path transform="scale(1,-1)" fill="#000" d="M763 0 L583 0 L583 1147 C500 1070 330 960 76 838 L76 1012 C250 1090 440 1230 548 1409 L763 1409 Z"/></svg></i><i style="width:6px">3</i><i style="width:3px">/</i><i style="width:6px">2</i><i style="width:6px">0</i><i style="width:6px">2</i><i style="width:6px">3</i></div>
<div class="t rg" style="left:664px;top:412px"><i style="width:6px">8</i><i style="width:3px">/</i><i class="g1" style="width:6px">1<svg class="o1" width="6" height="13" viewBox="0 -1919.5 1117.1 2420.4"><path transform="scale(1,-1)" fill="#000" d="M763 0 L583 0 L583 1147 C500 1070 330 960 76 838 L76 1012 C250 1090 440 1230 548 1409 L763 1409 Z"/></svg></i><i style="width:6px">5</i><i style="width:3px">/</i><i style="width:6px">2</i><i style="width:6px">0</i><i style="width:6px">2</i><i style="width:6px">2</i></div>
<div class="t rg" style="left:737px;top:412px"><i style="width:6px">2</i><i style="width:3px">/</i><i style="width:6px">2</i><i style="width:6px">3</i><i style="width:3px">/</i><i style="width:6px">2</i><i style="width:6px">0</i><i style="width:6px">2</i><i style="width:6px">3</i></div>
<div class="t rg" style="left:810px;top:412px"><i class="g1" style="width:6px">1<svg class="o1" width="6" height="13" viewBox="0 -1919.5 1117.1 2420.4"><path transform="scale(1,-1)" fill="#000" d="M763 0 L583 0 L583 1147 C500 1070 330 960 76 838 L76 1012 C250 1090 440 1230 548 1409 L763 1409 Z"/></svg></i><i class="g1" style="width:6px">1<svg class="o1" width="6" height="13" viewBox="0 -1919.5 1117.1 2420.4"><path transform="scale(1,-1)" fill="#000" d="M763 0 L583 0 L583 1147 C500 1070 330 960 76 838 L76 1012 C250 1090 440 1230 548 1409 L763 1409 Z"/></svg></i><i style="width:3px">/</i><i style="width:6px">4</i><i style="width:3px">/</i><i style="width:6px">2</i><i style="width:6px">0</i><i style="width:6px">2</i><i style="width:6px">2</i></div>
<div class="t bd" style="left:21px;top:429px"><i style="width:10px">W</i><i style="width:7px">P</i><i class="g1" style="width:6px">_<b class="us" style="width:6px;background:#000"></b></i><i style="width:7px">N</i><i style="width:8px">O</i><i style="width:3px">:</i><i style="width:3px">&nbsp;</i><i class="g1" style="width:6px">1<svg class="o1" width="6" height="13" viewBox="0 -1919.5 1117.1 2420.4"><path transform="scale(1,-1)" fill="#000" d="M790 0 L450 0 L450 1000 C370 940 240 900 110 870 L110 1090 C290 1150 410 1260 480 1409 L790 1409 Z"/></svg></i><i style="width:3px">.</i><i class="g1" style="width:6px">1<svg class="o1" width="6" height="13" viewBox="0 -1919.5 1117.1 2420.4"><path transform="scale(1,-1)" fill="#000" d="M790 0 L450 0 L450 1000 C370 940 240 900 110 870 L110 1090 C290 1150 410 1260 480 1409 L790 1409 Z"/></svg></i><i style="width:3px">.</i><i style="width:6px">4</i><i style="width:3px">.</i><i class="g1" style="width:6px">1<svg class="o1" width="6" height="13" viewBox="0 -1919.5 1117.1 2420.4"><path transform="scale(1,-1)" fill="#000" d="M790 0 L450 0 L450 1000 C370 940 240 900 110 870 L110 1090 C290 1150 410 1260 480 1409 L790 1409 Z"/></svg></i><i style="width:6px">0</i><i style="width:6px">2</i><i style="width:3px">&nbsp;</i><i style="width:6px">2</i><i style="width:7px">D</i><i style="width:3px">&nbsp;</i><i style="width:6px">E</i><i style="width:6px">x</i><i style="width:4px">t</i><i style="width:5px">r</i><i style="width:6px">a</i><i style="width:6px">c</i><i style="width:4px">t</i><i style="width:3px">i</i><i style="width:7px">o</i><i style="width:7px">n</i><i style="width:3px">&nbsp;</i><i style="width:7px">U</i><i style="width:7px">n</i><i style="width:3px">i</i><i style="width:4px">t</i><i style="width:3px">&nbsp;</i><i class="g1" style="width:6px">1<svg class="o1" width="6" height="13" viewBox="0 -1919.5 1117.1 2420.4"><path transform="scale(1,-1)" fill="#000" d="M790 0 L450 0 L450 1000 C370 940 240 900 110 870 L110 1090 C290 1150 410 1260 480 1409 L790 1409 Z"/></svg></i><i style="width:6px">0</i><i style="width:6px">2</i></div>
<div class="t bd" style="left:299px;top:429px"><i style="width:6px">6</i><i style="width:3px">/</i><i style="width:6px">2</i><i style="width:6px">0</i><i style="width:3px">/</i><i style="width:6px">2</i><i style="width:6px">0</i><i style="width:6px">2</i><i style="width:6px">2</i></div>
<div class="t bd" style="left:372px;top:429px"><i style="width:6px">6</i><i style="width:3px">/</i><i style="width:6px">2</i><i style="width:6px">0</i><i style="width:3px">/</i><i style="width:6px">2</i><i style="width:6px">0</i><i style="width:6px">2</i><i style="width:6px">2</i></div>
<div class="t bd" style="left:445px;top:429px"><i style="width:6px">8</i><i style="width:3px">/</i><i class="g1" style="width:6px">1<svg class="o1" width="6" height="13" viewBox="0 -1919.5 1117.1 2420.4"><path transform="scale(1,-1)" fill="#000" d="M790 0 L450 0 L450 1000 C370 940 240 900 110 870 L110 1090 C290 1150 410 1260 480 1409 L790 1409 Z"/></svg></i><i style="width:6px">2</i><i style="width:3px">/</i><i style="width:6px">2</i><i style="width:6px">0</i><i style="width:6px">2</i><i style="width:6px">2</i></div>
<div class="t bd" style="left:518px;top:429px"><i style="width:6px">8</i><i style="width:3px">/</i><i class="g1" style="width:6px">1<svg class="o1" width="6" height="13" viewBox="0 -1919.5 1117.1 2420.4"><path transform="scale(1,-1)" fill="#000" d="M790 0 L450 0 L450 1000 C370 940 240 900 110 870 L110 1090 C290 1150 410 1260 480 1409 L790 1409 Z"/></svg></i><i style="width:6px">2</i><i style="width:3px">/</i><i style="width:6px">2</i><i style="width:6px">0</i><i style="width:6px">2</i><i style="width:6px">2</i></div>
<div class="t bd" style="left:591px;top:429px"><i style="width:6px">6</i><i style="width:3px">/</i><i style="width:6px">2</i><i style="width:6px">0</i><i style="width:3px">/</i><i style="width:6px">2</i><i style="width:6px">0</i><i style="width:6px">2</i><i style="width:6px">2</i></div>
<div class="t bd" style="left:664px;top:429px"><i style="width:6px">8</i><i style="width:3px">/</i><i class="g1" style="width:6px">1<svg class="o1" width="6" height="13" viewBox="0 -1919.5 1117.1 2420.4"><path transform="scale(1,-1)" fill="#000" d="M790 0 L450 0 L450 1000 C370 940 240 900 110 870 L110 1090 C290 1150 410 1260 480 1409 L790 1409 Z"/></svg></i><i style="width:6px">5</i><i style="width:3px">/</i><i style="width:6px">2</i><i style="width:6px">0</i><i style="width:6px">2</i><i style="width:6px">2</i></div>
<div class="t bd" style="left:737px;top:429px"><i style="width:6px">8</i><i style="width:3px">/</i><i class="g1" style="width:6px">1<svg class="o1" width="6" height="13" viewBox="0 -1919.5 1117.1 2420.4"><path transform="scale(1,-1)" fill="#000" d="M790 0 L450 0 L450 1000 C370 940 240 900 110 870 L110 1090 C290 1150 410 1260 480 1409 L790 1409 Z"/></svg></i><i style="width:6px">2</i><i style="width:3px">/</i><i style="width:6px">2</i><i style="width:6px">0</i><i style="width:6px">2</i><i style="width:6px">2</i></div>
<div class="t bd" style="left:810px;top:429px"><i class="g1" style="width:6px">1<svg class="o1" width="6" height="13" viewBox="0 -1919.5 1117.1 2420.4"><path transform="scale(1,-1)" fill="#000" d="M790 0 L450 0 L450 1000 C370 940 240 900 110 870 L110 1090 C290 1150 410 1260 480 1409 L790 1409 Z"/></svg></i><i style="width:6px">0</i><i style="width:3px">/</i><i style="width:6px">7</i><i style="width:3px">/</i><i style="width:6px">2</i><i style="width:6px">0</i><i style="width:6px">2</i><i style="width:6px">2</i></div>
<div class="t rg" style="left:31px;top:448px"><i class="g1" style="width:6px">1<svg class="o1" width="6" height="13" viewBox="0 -1919.5 1117.1 2420.4"><path transform="scale(1,-1)" fill="#000" d="M763 0 L583 0 L583 1147 C500 1070 330 960 76 838 L76 1012 C250 1090 440 1230 548 1409 L763 1409 Z"/></svg></i><i style="width:3px">.</i><i class="g1" style="width:6px">1<svg class="o1" width="6" height="13" viewBox="0 -1919.5 1117.1 2420.4"><path transform="scale(1,-1)" fill="#000" d="M763 0 L583 0 L583 1147 C500 1070 330 960 76 838 L76 1012 C250 1090 440 1230 548 1409 L763 1409 Z"/></svg></i><i style="width:3px">.</i><i style="width:6px">4</i><i style="width:3px">.</i><i class="g1" style="width:6px">1<svg class="o1" width="6" height="13" viewBox="0 -1919.5 1117.1 2420.4"><path transform="scale(1,-1)" fill="#000" d="M763 0 L583 0 L583 1147 C500 1070 330 960 76 838 L76 1012 C250 1090 440 1230 548 1409 L763 1409 Z"/></svg></i><i style="width:6px">0</i><i style="width:6px">2</i></div>
<div class="t rg" style="left:186px;top:448px"><i class="g1" style="width:6px">1<svg class="o1" width="6" height="13" viewBox="0 -1919.5 1117.1 2420.4"><path transform="scale(1,-1)" fill="#000" d="M763 0 L583 0 L583 1147 C500 1070 330 960 76 838 L76 1012 C250 1090 440 1230 548 1409 L763 1409 Z"/></svg></i><i style="width:3px">.</i><i class="g1" style="width:6px">1<svg class="o1" width="6" height="13" viewBox="0 -1919.5 1117.1 2420.4"><path transform="scale(1,-1)" fill="#000" d="M763 0 L583 0 L583 1147 C500 1070 330 960 76 838 L76 1012 C250 1090 440 1230 548 1409 L763 1409 Z"/></svg></i><i style="width:3px">.</i><i style="width:6px">4</i><i style="width:3px">.</i><i class="g1" style="width:6px">1<svg class="o1" width="6" height="13" viewBox="0 -1919.5 1117.1 2420.4"><path transform="scale(1,-1)" fill="#000" d="M763 0 L583 0 L583 1147 C500 1070 330 960 76 838 L76 1012 C250 1090 440 1230 548 1409 L763 1409 Z"/></svg></i><i style="width:6px">0</i><i style="width:6px">2</i></div>
<div class="t rg" style="left:299px;top:448px"><i style="width:6px">6</i><i style="width:3px">/</i><i style="width:6px">2</i><i style="width:6px">0</i><i style="width:3px">/</i><i style="width:6px">2</i><i style="width:6px">0</i><i style="width:6px">2</i><i style="width:6px">2</i></div>
<div class="t rg" style="left:372px;top:448px"><i style="width:6px">6</i><i style="width:3px">/</i><i style="width:6px">2</i><i style="width:6px">0</i><i style="width:3px">/</i><i style="width:6px">2</i><i style="width:6px">0</i><i style="width:6px">2</i><i style="width:6px">2</i></div>
<div class="t rg" style="left:445px;top:448px"><i style="width:6px">8</i><i style="width:3px">/</i><i class="g1" style="width:6px">1<svg class="o1" width="6" height="13" viewBox="0 -1919.5 1117.1 2420.4"><path transform="scale(1,-1)" fill="#000" d="M763 0 L583 0 L583 1147 C500 1070 330 960 76 838 L76 1012 C250 1090 440 1230 548 1409 L763 1409 Z"/></svg></i><i style="width:6px">2</i><i style="width:3px">/</i><i style="width:6px">2</i><i style="width:6px">0</i><i style="width:6px">2</i><i style="width:6px">2</i></div>
<div class="t rg" style="left:518px;top:448px"><i style="width:6px">8</i><i style="width:3px">/</i><i class="g1" style="width:6px">1<svg class="o1" width="6" height="13" viewBox="0 -1919.5 1117.1 2420.4"><path transform="scale(1,-1)" fill="#000" d="M763 0 L583 0 L583 1147 C500 1070 330 960 76 838 L76 1012 C250 1090 440 1230 548 1409 L763 1409 Z"/></svg></i><i style="width:6px">2</i><i style="width:3px">/</i><i style="width:6px">2</i><i style="width:6px">0</i><i style="width:6px">2</i><i style="width:6px">2</i></div>
<div class="t rg" style="left:591px;top:448px"><i style="width:6px">6</i><i style="width:3px">/</i><i style="width:6px">2</i><i style="width:6px">0</i><i style="width:3px">/</i><i style="width:6px">2</i><i style="width:6px">0</i><i style="width:6px">2</i><i style="width:6px">2</i></div>
<div class="t rg" style="left:664px;top:448px"><i style="width:6px">8</i><i style="width:3px">/</i><i class="g1" style="width:6px">1<svg class="o1" width="6" height="13" viewBox="0 -1919.5 1117.1 2420.4"><path transform="scale(1,-1)" fill="#000" d="M763 0 L583 0 L583 1147 C500 1070 330 960 76 838 L76 1012 C250 1090 440 1230 548 1409 L763 1409 Z"/></svg></i><i style="width:6px">5</i><i style="width:3px">/</i><i style="width:6px">2</i><i style="width:6px">0</i><i style="width:6px">2</i><i style="width:6px">2</i></div>
<div class="t rg" style="left:737px;top:448px"><i style="width:6px">8</i><i style="width:3px">/</i><i class="g1" style="width:6px">1<svg class="o1" width="6" height="13" viewBox="0 -1919.5 1117.1 2420.4"><path transform="scale(1,-1)" fill="#000" d="M763 0 L583 0 L583 1147 C500 1070 330 960 76 838 L76 1012 C250 1090 440 1230 548 1409 L763 1409 Z"/></svg></i><i style="width:6px">2</i><i style="width:3px">/</i><i style="width:6px">2</i><i style="width:6px">0</i><i style="width:6px">2</i><i style="width:6px">2</i></div>
<div class="t rg" style="left:810px;top:448px"><i class="g1" style="width:6px">1<svg class="o1" width="6" height="13" viewBox="0 -1919.5 1117.1 2420.4"><path transform="scale(1,-1)" fill="#000" d="M763 0 L583 0 L583 1147 C500 1070 330 960 76 838 L76 1012 C250 1090 440 1230 548 1409 L763 1409 Z"/></svg></i><i style="width:6px">0</i><i style="width:3px">/</i><i style="width:6px">7</i><i style="width:3px">/</i><i style="width:6px">2</i><i style="width:6px">0</i><i style="width:6px">2</i><i style="width:6px">2</i></div>
<div class="t bd" style="left:21px;top:465px"><i style="width:10px">W</i><i style="width:7px">P</i><i class="g1" style="width:6px">_<b class="us" style="width:6px;background:#000"></b></i><i style="width:7px">N</i><i style="width:8px">O</i><i style="width:3px">:</i><i style="width:3px">&nbsp;</i><i class="g1" style="width:6px">1<svg class="o1" width="6" height="13" viewBox="0 -1919.5 1117.1 2420.4"><path transform="scale(1,-1)" fill="#000" d="M790 0 L450 0 L450 1000 C370 940 240 900 110 870 L110 1090 C290 1150 410 1260 480 1409 L790 1409 Z"/></svg></i><i style="width:3px">.</i><i class="g1" style="width:6px">1<svg class="o1" width="6" height="13" viewBox="0 -1919.5 1117.1 2420.4"><path transform="scale(1,-1)" fill="#000" d="M790 0 L450 0 L450 1000 C370 940 240 900 110 870 L110 1090 C290 1150 410 1260 480 1409 L790 1409 Z"/></svg></i><i style="width:3px">.</i><i style="width:6px">4</i><i style="width:3px">.</i><i class="g1" style="width:6px">1<svg class="o1" width="6" height="13" viewBox="0 -1919.5 1117.1 2420.4"><path transform="scale(1,-1)" fill="#000" d="M790 0 L450 0 L450 1000 C370 940 240 900 110 870 L110 1090 C290 1150 410 1260 480 1409 L790 1409 Z"/></svg></i><i style="width:6px">0</i><i style="width:6px">3</i><i style="width:3px">&nbsp;</i><i style="width:6px">2</i><i style="width:7px">D</i><i style="width:3px">&nbsp;</i><i style="width:6px">E</i><i style="width:6px">x</i><i style="width:4px">t</i><i style="width:5px">r</i><i style="width:6px">a</i><i style="width:6px">c</i><i style="width:4px">t</i><i style="width:3px">i</i><i style="width:7px">o</i><i style="width:7px">n</i><i style="width:3px">&nbsp;</i><i style="width:7px">U</i><i style="width:7px">n</i><i style="width:3px">i</i><i style="width:4px">t</i><i style="width:3px">&nbsp;</i><i class="g1" style="width:6px">1<svg class="o1" width="6" height="13" viewBox="0 -1919.5 1117.1 2420.4"><path transform="scale(1,-1)" fill="#000" d="M790 0 L450 0 L450 1000 C370 940 240 900 110 870 L110 1090 C290 1150 410 1260 480 1409 L790 1409 Z"/></svg></i><i style="width:6px">0</i><i style="width:6px">3</i></div>
<div class="t bd" style="left:305px;top:465px"><i style="width:6px">7</i><i style="width:3px">/</i><i class="g1" style="width:6px">1<svg class="o1" width="6" height="13" viewBox="0 -1919.5 1117.1 2420.4"><path transform="scale(1,-1)" fill="#000" d="M790 0 L450 0 L450 1000 C370 940 240 900 110 870 L110 1090 C290 1150 410 1260 480 1409 L790 1409 Z"/></svg></i><i style="width:3px">/</i><i style="width:6px">2</i><i style="width:6px">0</i><i style="width:6px">2</i><i style="width:6px">2</i></div>
<div class="t bd" style="left:372px;top:465px"><i style="width:6px">8</i><i style="width:3px">/</i><i class="g1" style="width:6px">1<svg class="o1" width="6" height="13" viewBox="0 -1919.5 1117.1 2420.4"><path transform="scale(1,-1)" fill="#000" d="M790 0 L450 0 L450 1000 C370 940 240 900 110 870 L110 1090 C290 1150 410 1260 480 1409 L790 1409 Z"/></svg></i><i style="width:6px">5</i><i style="width:3px">/</i><i style="width:6px">2</i><i style="width:6px">0</i><i style="width:6px">2</i><i style="width:6px">2</i></div>
<div class="t bd" style="left:451px;top:465px"><i style="width:6px">3</i><i style="width:3px">/</i><i style="width:6px">9</i><i style="width:3px">/</i><i style="width:6px">2</i><i style="width:6px">0</i><i style="width:6px">2</i><i style="width:6px">3</i></div>
<div class="t bd" style="left:524px;top:465px"><i style="width:6px">9</i><i style="width:3px">/</i><i style="width:6px">9</i><i style="width:3px">/</i><i style="width:6px">2</i><i style="width:6px">0</i><i style="width:6px">2</i><i style="width:6px">2</i></div>
<div class="t bd" style="left:591px;top:465px"><i style="width:6px">8</i><i style="width:3px">/</i><i class="g1" style="width:6px">1<svg class="o1" width="6" height="13" viewBox="0 -1919.5 1117.1 2420.4"><path transform="scale(1,-1)" fill="#000" d="M790 0 L450 0 L450 1000 C370 940 240 900 110 870 L110 1090 C290 1150 410 1260 480 1409 L790 1409 Z"/></svg></i><i style="width:6px">5</i><i style="width:3px">/</i><i style="width:6px">2</i><i style="width:6px">0</i><i style="width:6px">2</i><i style="width:6px">2</i></div>
<div class="t bd" style="left:664px;top:465px"><i style="width:6px">8</i><i style="width:3px">/</i><i class="g1" style="width:6px">1<svg class="o1" width="6" height="13" viewBox="0 -1919.5 1117.1 2420.4"><path transform="scale(1,-1)" fill="#000" d="M790 0 L450 0 L450 1000 C370 940 240 900 110 870 L110 1090 C290 1150 410 1260 480 1409 L790 1409 Z"/></svg></i><i style="width:6px">5</i><i style="width:3px">/</i><i style="width:6px">2</i><i style="width:6px">0</i><i style="width:6px">2</i><i style="width:6px">2</i></div>
<div class="t bd" style="left:743px;top:465px"><i style="width:6px">9</i><i style="width:3px">/</i><i style="width:6px">9</i><i style="width:3px">/</i><i style="width:6px">2</i><i style="width:6px">0</i><i style="width:6px">2</i><i style="width:6px">2</i></div>
<div class="t bd" style="left:816px;top:465px"><i style="width:6px">9</i><i style="width:3px">/</i><i style="width:6px">9</i><i style="width:3px">/</i><i style="width:6px">2</i><i style="width:6px">0</i><i style="width:6px">2</i><i style="width:6px">2</i></div>
<div class="t rg" style="left:31px;top:485px"><i class="g1" style="width:6px">1<svg class="o1" width="6" height="13" viewBox="0 -1919.5 1117.1 2420.4"><path transform="scale(1,-1)" fill="#000" d="M763 0 L583 0 L583 1147 C500 1070 330 960 76 838 L76 1012 C250 1090 440 1230 548 1409 L763 1409 Z"/></svg></i><i style="width:3px">.</i><i class="g1" style="width:6px">1<svg class="o1" width="6" height="13" viewBox="0 -1919.5 1117.1 2420.4"><path transform="scale(1,-1)" fill="#000" d="M763 0 L583 0 L583 1147 C500 1070 330 960 76 838 L76 1012 C250 1090 440 1230 548 1409 L763 1409 Z"/></svg></i><i style="width:3px">.</i><i style="width:6px">4</i><i style="width:3px">.</i><i class="g1" style="width:6px">1<svg class="o1" width="6" height="13" viewBox="0 -1919.5 1117.1 2420.4"><path transform="scale(1,-1)" fill="#000" d="M763 0 L583 0 L583 1147 C500 1070 330 960 76 838 L76 1012 C250 1090 440 1230 548 1409 L763 1409 Z"/></svg></i><i style="width:6px">0</i><i style="width:6px">3</i></div>
<div class="t rg" style="left:186px;top:485px"><i class="g1" style="width:6px">1<svg class="o1" width="6" height="13" viewBox="0 -1919.5 1117.1 2420.4"><path transform="scale(1,-1)" fill="#000" d="M763 0 L583 0 L583 1147 C500 1070 330 960 76 838 L76 1012 C250 1090 440 1230 548 1409 L763 1409 Z"/></svg></i><i style="width:3px">.</i><i class="g1" style="width:6px">1<svg class="o1" width="6" height="13" viewBox="0 -1919.5 1117.1 2420.4"><path transform="scale(1,-1)" fill="#000" d="M763 0 L583 0 L583 1147 C500 1070 330 960 76 838 L76 1012 C250 1090 440 1230 548 1409 L763 1409 Z"/></svg></i><i style="width:3px">.</i><i style="width:6px">4</i><i style="width:3px">.</i><i class="g1" style="width:6px">1<svg class="o1" width="6" height="13" viewBox="0 -1919.5 1117.1 2420.4"><path transform="scale(1,-1)" fill="#000" d="M763 0 L583 0 L583 1147 C500 1070 330 960 76 838 L76 1012 C250 1090 440 1230 548 1409 L763 1409 Z"/></svg></i><i style="width:6px">0</i><i style="width:6px">3</i></div>
<div class="t rg" style="left:305px;top:485px"><i style="width:6px">7</i><i style="width:3px">/</i><i class="g1" style="width:6px">1<svg class="o1" width="6" height="13" viewBox="0 -1919.5 1117.1 2420.4"><path transform="scale(1,-1)" fill="#000" d="M763 0 L583 0 L583 1147 C500 1070 330 960 76 838 L76 1012 C250 1090 440 1230 548 1409 L763 1409 Z"/></svg></i><i style="width:3px">/</i><i style="width:6px">2</i><i style="width:6px">0</i><i style="width:6px">2</i><i style="width:6px">2</i></div>
<div class="t rg" style="left:372px;top:485px"><i style="width:6px">8</i><i style="width:3px">/</i><i class="g1" style="width:6px">1<svg class="o1" width="6" height="13" viewBox="0 -1919.5 1117.1 2420.4"><path transform="scale(1,-1)" fill="#000" d="M763 0 L583 0 L583 1147 C500 1070 330 960 76 838 L76 1012 C250 1090 440 1230 548 1409 L763 1409 Z"/></svg></i><i style="width:6px">5</i><i style="width:3px">/</i><i style="width:6px">2</i><i style="width:6px">0</i><i style="width:6px">2</i><i style="width:6px">2</i></div>
<div class="t rg" style="left:451px;top:485px"><i style="width:6px">3</i><i style="width:3px">/</i><i style="width:6px">9</i><i style="width:3px">/</i><i style="width:6px">2</i><i style="width:6px">0</i><i style="width:6px">2</i><i style="width:6px">3</i></div>
<div class="t rg" style="left:524px;top:485px"><i style="width:6px">9</i><i style="width:3px">/</i><i style="width:6px">9</i><i style="width:3px">/</i><i style="width:6px">2</i><i style="width:6px">0</i><i style="width:6px">2</i><i style="width:6px">2</i></div>
<div class="t rg" style="left:591px;top:485px"><i style="width:6px">8</i><i style="width:3px">/</i><i class="g1" style="width:6px">1<svg class="o1" width="6" height="13" viewBox="0 -1919.5 1117.1 2420.4"><path transform="scale(1,-1)" fill="#000" d="M763 0 L583 0 L583 1147 C500 1070 330 960 76 838 L76 1012 C250 1090 440 1230 548 1409 L763 1409 Z"/></svg></i><i style="width:6px">5</i><i style="width:3px">/</i><i style="width:6px">2</i><i style="width:6px">0</i><i style="width:6px">2</i><i style="width:6px">2</i></div>
<div class="t rg" style="left:664px;top:485px"><i style="width:6px">8</i><i style="width:3px">/</i><i class="g1" style="width:6px">1<svg class="o1" width="6" height="13" viewBox="0 -1919.5 1117.1 2420.4"><path transform="scale(1,-1)" fill="#000" d="M763 0 L583 0 L583 1147 C500 1070 330 960 76 838 L76 1012 C250 1090 440 1230 548 1409 L763 1409 Z"/></svg></i><i style="width:6px">5</i><i style="width:3px">/</i><i style="width:6px">2</i><i style="width:6px">0</i><i style="width:6px">2</i><i style="width:6px">2</i></div>
<div class="t rg" style="left:743px;top:485px"><i style="width:6px">9</i><i style="width:3px">/</i><i style="width:6px">9</i><i style="width:3px">/</i><i style="width:6px">2</i><i style="width:6px">0</i><i style="width:6px">2</i><i style="width:6px">2</i></div>
<div class="t rg" style="left:816px;top:485px"><i style="width:6px">9</i><i style="width:3px">/</i><i style="width:6px">9</i><i style="width:3px">/</i><i style="width:6px">2</i><i style="width:6px">0</i><i style="width:6px">2</i><i style="width:6px">2</i></div>
<div class="ln" style="left:11px;top:500px;width:1141px"></div>
<div class="t rg" style="left:12px;top:505px"><i style="width:6px">v</i><i style="width:6px">8</i><i style="width:3px">.</i><i class="g1" style="width:6px">1<svg class="o1" width="6" height="13" viewBox="0 -1919.5 1117.1 2420.4"><path transform="scale(1,-1)" fill="#000" d="M763 0 L583 0 L583 1147 C500 1070 330 960 76 838 L76 1012 C250 1090 440 1230 548 1409 L763 1409 Z"/></svg></i><i style="width:3px">.</i><i style="width:6px">0</i><i style="width:6px">0</i><i style="width:6px">0</i><i style="width:3px">&nbsp;</i><i style="width:4px">(</i><i style="width:7px">S</i><i style="width:8px">Y</i><i style="width:7px">S</i><i style="width:8px">A</i><i style="width:7px">D</i><i style="width:8px">M</i><i style="width:2px">I</i><i style="width:7px">N</i><i style="width:4px">)</i><i style="width:3px">&nbsp;</i><i style="width:4px">-</i></div>
<div class="t rg" style="left:914px;top:505px"><i style="width:6px">P</i><i style="width:6px">a</i><i style="width:6px">g</i><i style="width:6px">e</i><i style="width:3px">&nbsp;</i><i class="g1" style="width:6px">1<svg class="o1" width="6" height="13" viewBox="0 -1919.5 1117.1 2420.4"><path transform="scale(1,-1)" fill="#000" d="M763 0 L583 0 L583 1147 C500 1070 330 960 76 838 L76 1012 C250 1090 440 1230 548 1409 L763 1409 Z"/></svg></i><i style="width:3px">&nbsp;</i><i style="width:6px">o</i><i style="width:4px">f</i><i style="width:3px">&nbsp;</i><i class="g1" style="width:6px">1<svg class="o1" width="6" height="13" viewBox="0 -1919.5 1117.1 2420.4"><path transform="scale(1,-1)" fill="#000" d="M763 0 L583 0 L583 1147 C500 1070 330 960 76 838 L76 1012 C250 1090 440 1230 548 1409 L763 1409 Z"/></svg></i></div>
</body></html>
